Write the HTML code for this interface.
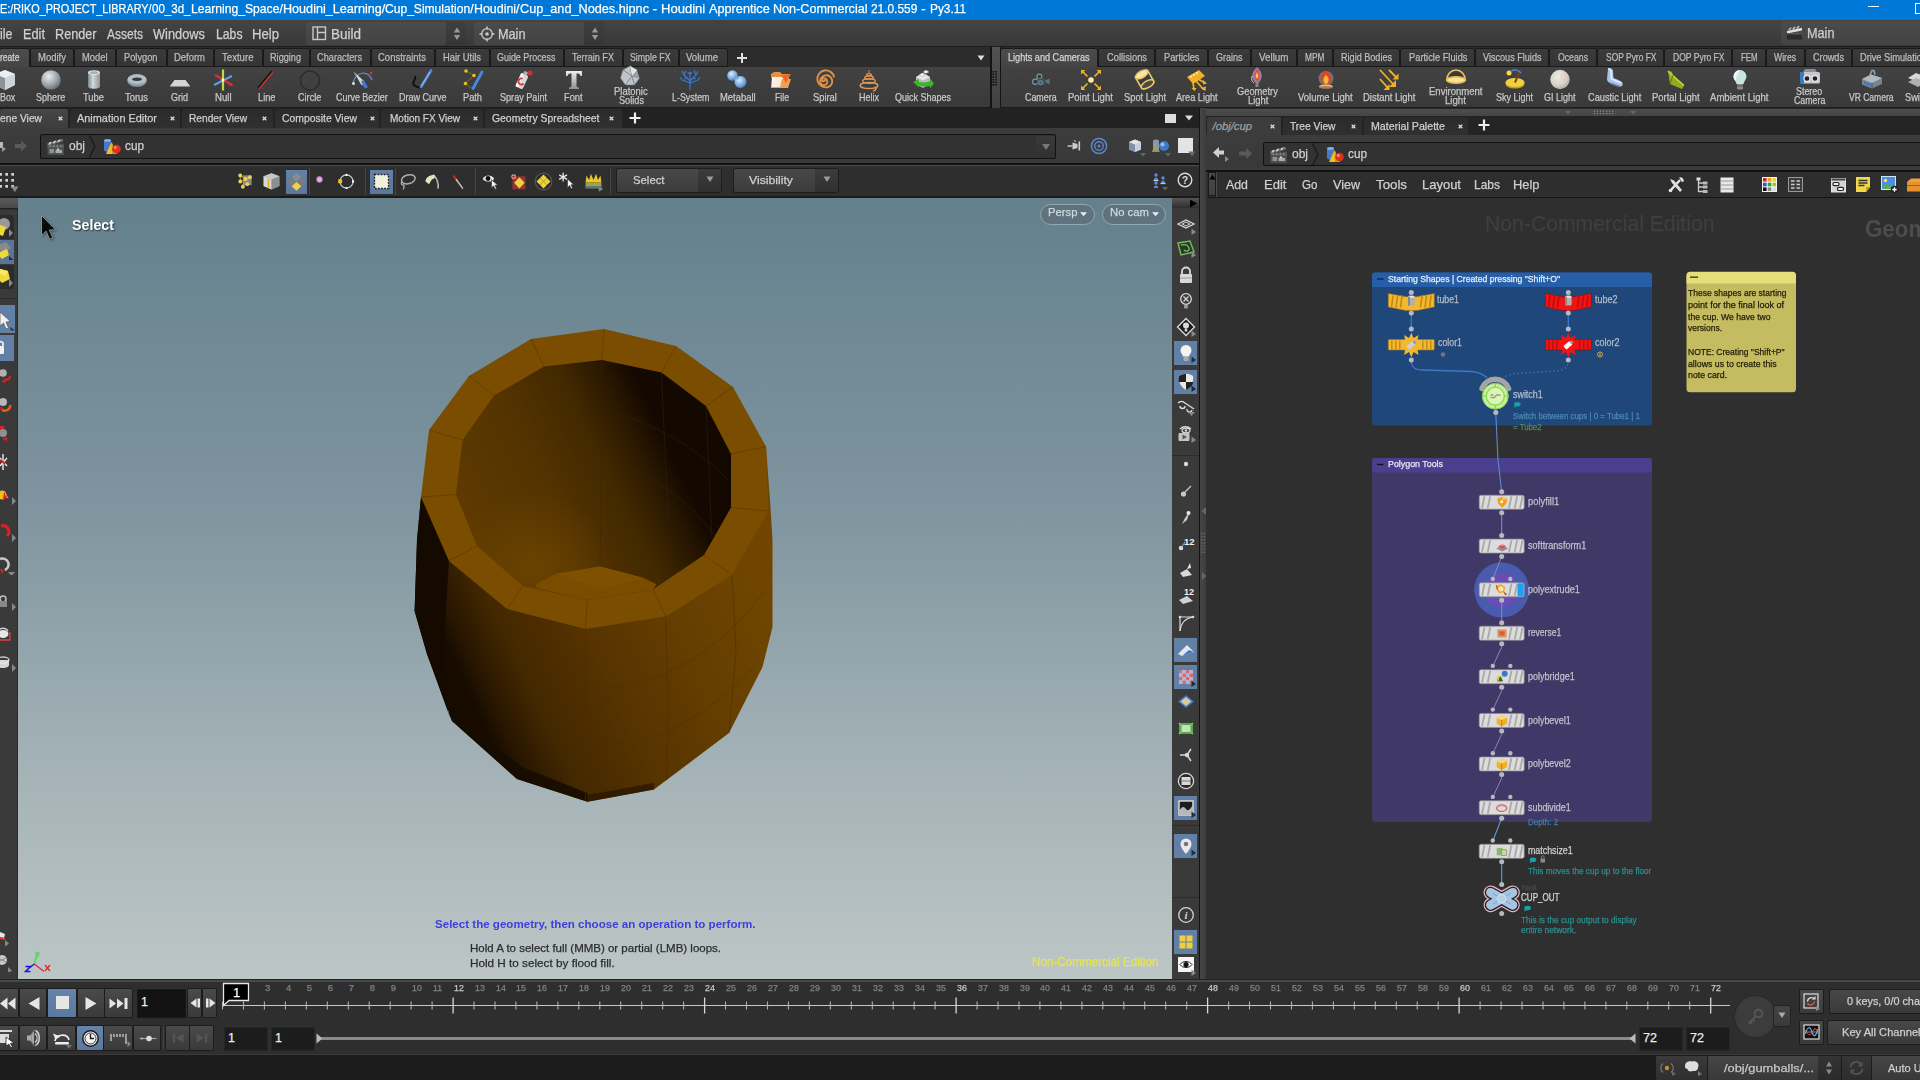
<!DOCTYPE html>
<html><head><meta charset="utf-8"><title>Houdini</title>
<style>
html,body{margin:0;padding:0;}html{overflow:hidden;width:1920px;height:1080px;}
body{width:1920px;height:1080px;overflow:hidden;background:#2f2f2f;position:relative;font-family:"Liberation Sans",sans-serif;}
body div,body span.t,body svg{position:absolute;display:block;}
span.t{white-space:nowrap;line-height:1.117;transform-origin:0 50%;-webkit-text-stroke:0.25px currentColor;}
</style></head><body>
<div style="left:0px;top:0px;width:1920px;height:20px;background:#0078d7;"></div>
<span class="t" style="left:0.0px;top:1.0px;font-size:13.5px;color:#fff;transform:scaleX(0.8024);">E:/RIKO_PROJECT_LIBRARY/</span>
<span class="t" style="left:151.8px;top:1.0px;font-size:13.5px;color:#fff;transform:scaleX(0.8557);">00_3d_</span>
<span class="t" style="left:190.5px;top:1.0px;font-size:13.5px;color:#fff;transform:scaleX(0.8993);">Learning_Space/</span>
<span class="t" style="left:282.5px;top:1.0px;font-size:13.5px;color:#fff;transform:scaleX(0.9335);">Houdini_Learning/</span>
<span class="t" style="left:385.0px;top:1.0px;font-size:13.5px;color:#fff;transform:scaleX(0.8934);">Cup_Simulation/</span>
<span class="t" style="left:473.8px;top:1.0px;font-size:13.5px;color:#fff;transform:scaleX(0.9196);">Houdini/</span>
<span class="t" style="left:519.5px;top:1.0px;font-size:13.5px;color:#fff;transform:scaleX(0.9392);">Cup_and_Nodes.hipnc</span>
<span class="t" style="left:652.5px;top:1.0px;font-size:13.5px;color:#fff;">-</span>
<span class="t" style="left:660.8px;top:1.0px;font-size:13.5px;color:#fff;transform:scaleX(0.9665);">Houdini</span>
<span class="t" style="left:708.8px;top:1.0px;font-size:13.5px;color:#fff;transform:scaleX(0.9412);">Apprentice</span>
<span class="t" style="left:773.0px;top:1.0px;font-size:13.5px;color:#fff;transform:scaleX(0.9331);">Non-Commercial</span>
<span class="t" style="left:871.2px;top:1.0px;font-size:13.5px;color:#fff;transform:scaleX(0.8801);">21.0.559</span>
<span class="t" style="left:921.0px;top:1.0px;font-size:13.5px;color:#fff;">-</span>
<span class="t" style="left:930.0px;top:1.0px;font-size:13.5px;color:#fff;transform:scaleX(0.8774);">Py3.11</span>
<div style="left:1868px;top:6px;width:11px;height:1px;background:#fff;"></div>
<div style="left:1915px;top:3px;width:10px;height:9px;background:transparent;border:1px solid #fff;"></div>
<div style="left:0px;top:20px;width:1920px;height:27px;background:linear-gradient(#444,#383838);"></div>
<div style="left:0px;top:46px;width:1920px;height:1px;background:#1d1d1d;"></div>
<span class="t" style="left:0.0px;top:25.7px;font-size:14.5px;color:#d0d0d0;transform:scaleX(0.8616);">ile</span>
<span class="t" style="left:23.0px;top:25.7px;font-size:14.5px;color:#d0d0d0;transform:scaleX(0.8805);">Edit</span>
<span class="t" style="left:55.0px;top:25.7px;font-size:14.5px;color:#d0d0d0;transform:scaleX(0.8726);">Render</span>
<span class="t" style="left:107.0px;top:25.7px;font-size:14.5px;color:#d0d0d0;transform:scaleX(0.8273);">Assets</span>
<span class="t" style="left:153.0px;top:25.7px;font-size:14.5px;color:#d0d0d0;transform:scaleX(0.8840);">Windows</span>
<span class="t" style="left:215.5px;top:25.7px;font-size:14.5px;color:#d0d0d0;transform:scaleX(0.8428);">Labs</span>
<span class="t" style="left:252.0px;top:25.7px;font-size:14.5px;color:#d0d0d0;transform:scaleX(0.9054);">Help</span>
<div style="left:306px;top:22px;width:140px;height:23px;background:linear-gradient(#4b4b4b,#434343);border-radius:2px;"></div>
<div style="left:446px;top:22px;width:20px;height:23px;background:linear-gradient(#3f3f3f,#363636);"></div>
<svg style="left:312px;top:26px;" width="15" height="15" viewBox="0 0 15 15"><rect x="1" y="1" width="12.5" height="12.5" fill="none" stroke="#c8c8c8" stroke-width="1.4"/><path d="M5.5 1v12.5M5.5 6.5h8" stroke="#c8c8c8" stroke-width="1.4" fill="none"/></svg>
<span class="t" style="left:331.0px;top:25.7px;font-size:14.5px;color:#d0d0d0;transform:scaleX(0.9304);">Build</span>
<svg style="left:452px;top:26px;" width="10" height="16" viewBox="0 0 10 16"><path d="M5 1.5L8.2 6.5H1.8zM5 14L8.2 9H1.8z" fill="#999"/></svg>
<div style="left:474px;top:22px;width:110px;height:23px;background:linear-gradient(#4b4b4b,#434343);border-radius:2px;"></div>
<div style="left:584px;top:22px;width:20px;height:23px;background:linear-gradient(#3f3f3f,#363636);"></div>
<svg style="left:479px;top:26px;" width="16" height="16" viewBox="0 0 16 16"><circle cx="8" cy="8" r="5.3" fill="none" stroke="#c8c8c8" stroke-width="1.3"/><circle cx="8" cy="8" r="1.8" fill="#c8c8c8"/><path d="M8 0.5v3M8 12.5v3M0.5 8h3M12.5 8h3" stroke="#c8c8c8" stroke-width="1.5"/></svg>
<span class="t" style="left:498.0px;top:25.7px;font-size:14.5px;color:#d0d0d0;transform:scaleX(0.8750);">Main</span>
<svg style="left:590px;top:26px;" width="10" height="16" viewBox="0 0 10 16"><path d="M5 1.5L8.2 6.5H1.8zM5 14L8.2 9H1.8z" fill="#999"/></svg>
<div style="left:1781px;top:21px;width:139px;height:24px;background:linear-gradient(#4b4b4b,#434343);border-radius:2px 0 0 2px;"></div>
<svg style="left:1786px;top:24px;" width="18" height="16" viewBox="0 0 18 16"><path d="M1 7l15-3.2v2.6L1 9.4z" fill="#ddd"/><path d="M2 6.2l2-2.8 1.8.3-2 2.8zM6 5.4l2-2.8 1.8.3-2 2.8zM10 4.6l2-2.8 1.8.3-2 2.8z" fill="#bbb"/><rect x="1" y="9" width="15" height="6.5" fill="#2a2a2a"/><rect x="1" y="9" width="15" height="1.5" fill="#555"/></svg>
<span class="t" style="left:1807.0px;top:24.9px;font-size:14.5px;color:#d0d0d0;transform:scaleX(0.8750);">Main</span>
<div style="left:0px;top:47px;width:1920px;height:20px;background:#2c2c2c;"></div>
<div style="left:0px;top:48.5px;width:29px;height:18.5px;background:linear-gradient(#4c4c4c,#454545);border-radius:2px 2px 0 0;box-shadow:0 0 0 1px #1a1a1a;"></div>
<span class="t" style="left:0.0px;top:51.7px;font-size:10.5px;color:#d4d4d4;transform:scaleX(0.8148);">reate</span>
<div style="left:31px;top:48.5px;width:42px;height:17.5px;background:linear-gradient(#3b3b3b,#343434);border-radius:2px 2px 0 0;box-shadow:0 0 0 1px #1a1a1a;"></div>
<span class="t" style="left:37.5px;top:51.7px;font-size:10.5px;color:#bdbdbd;transform:scaleX(0.9054);">Modify</span>
<div style="left:75px;top:48.5px;width:40px;height:17.5px;background:linear-gradient(#3b3b3b,#343434);border-radius:2px 2px 0 0;box-shadow:0 0 0 1px #1a1a1a;"></div>
<span class="t" style="left:81.5px;top:51.7px;font-size:10.5px;color:#bdbdbd;transform:scaleX(0.8916);">Model</span>
<div style="left:117px;top:48.5px;width:49px;height:17.5px;background:linear-gradient(#3b3b3b,#343434);border-radius:2px 2px 0 0;box-shadow:0 0 0 1px #1a1a1a;"></div>
<span class="t" style="left:124.0px;top:51.7px;font-size:10.5px;color:#bdbdbd;transform:scaleX(0.8828);">Polygon</span>
<div style="left:168px;top:48.5px;width:45px;height:17.5px;background:linear-gradient(#3b3b3b,#343434);border-radius:2px 2px 0 0;box-shadow:0 0 0 1px #1a1a1a;"></div>
<span class="t" style="left:174.0px;top:51.7px;font-size:10.5px;color:#bdbdbd;transform:scaleX(0.9005);">Deform</span>
<div style="left:215px;top:48.5px;width:47px;height:17.5px;background:linear-gradient(#3b3b3b,#343434);border-radius:2px 2px 0 0;box-shadow:0 0 0 1px #1a1a1a;"></div>
<span class="t" style="left:221.5px;top:51.7px;font-size:10.5px;color:#bdbdbd;transform:scaleX(0.9148);">Texture</span>
<div style="left:264px;top:48.5px;width:45px;height:17.5px;background:linear-gradient(#3b3b3b,#343434);border-radius:2px 2px 0 0;box-shadow:0 0 0 1px #1a1a1a;"></div>
<span class="t" style="left:270.0px;top:51.7px;font-size:10.5px;color:#bdbdbd;transform:scaleX(0.8706);">Rigging</span>
<div style="left:311px;top:48.5px;width:59px;height:17.5px;background:linear-gradient(#3b3b3b,#343434);border-radius:2px 2px 0 0;box-shadow:0 0 0 1px #1a1a1a;"></div>
<span class="t" style="left:317.0px;top:51.7px;font-size:10.5px;color:#bdbdbd;transform:scaleX(0.8763);">Characters</span>
<div style="left:372px;top:48.5px;width:62px;height:17.5px;background:linear-gradient(#3b3b3b,#343434);border-radius:2px 2px 0 0;box-shadow:0 0 0 1px #1a1a1a;"></div>
<span class="t" style="left:378.0px;top:51.7px;font-size:10.5px;color:#bdbdbd;transform:scaleX(0.9038);">Constraints</span>
<div style="left:436px;top:48.5px;width:53px;height:17.5px;background:linear-gradient(#3b3b3b,#343434);border-radius:2px 2px 0 0;box-shadow:0 0 0 1px #1a1a1a;"></div>
<span class="t" style="left:442.5px;top:51.7px;font-size:10.5px;color:#bdbdbd;transform:scaleX(0.8923);">Hair Utils</span>
<div style="left:491px;top:48.5px;width:72px;height:17.5px;background:linear-gradient(#3b3b3b,#343434);border-radius:2px 2px 0 0;box-shadow:0 0 0 1px #1a1a1a;"></div>
<span class="t" style="left:497.0px;top:51.7px;font-size:10.5px;color:#bdbdbd;transform:scaleX(0.8495);">Guide Process</span>
<div style="left:565px;top:48.5px;width:57px;height:17.5px;background:linear-gradient(#3b3b3b,#343434);border-radius:2px 2px 0 0;box-shadow:0 0 0 1px #1a1a1a;"></div>
<span class="t" style="left:572.0px;top:51.7px;font-size:10.5px;color:#bdbdbd;transform:scaleX(0.8672);">Terrain FX</span>
<div style="left:624px;top:48.5px;width:54px;height:17.5px;background:linear-gradient(#3b3b3b,#343434);border-radius:2px 2px 0 0;box-shadow:0 0 0 1px #1a1a1a;"></div>
<span class="t" style="left:630.0px;top:51.7px;font-size:10.5px;color:#bdbdbd;transform:scaleX(0.8362);">Simple FX</span>
<div style="left:680px;top:48.5px;width:47px;height:17.5px;background:linear-gradient(#3b3b3b,#343434);border-radius:2px 2px 0 0;box-shadow:0 0 0 1px #1a1a1a;"></div>
<span class="t" style="left:686.0px;top:51.7px;font-size:10.5px;color:#bdbdbd;transform:scaleX(0.9137);">Volume</span>
<div style="left:1001px;top:48.5px;width:96px;height:18.5px;background:linear-gradient(#4c4c4c,#454545);border-radius:2px 2px 0 0;box-shadow:0 0 0 1px #1a1a1a;"></div>
<span class="t" style="left:1007.5px;top:51.7px;font-size:10.5px;color:#d4d4d4;transform:scaleX(0.8673);">Lights and Cameras</span>
<div style="left:1099px;top:48.5px;width:55px;height:17.5px;background:linear-gradient(#3b3b3b,#343434);border-radius:2px 2px 0 0;box-shadow:0 0 0 1px #1a1a1a;"></div>
<span class="t" style="left:1106.5px;top:51.7px;font-size:10.5px;color:#bdbdbd;transform:scaleX(0.8902);">Collisions</span>
<div style="left:1156px;top:48.5px;width:51px;height:17.5px;background:linear-gradient(#3b3b3b,#343434);border-radius:2px 2px 0 0;box-shadow:0 0 0 1px #1a1a1a;"></div>
<span class="t" style="left:1163.5px;top:51.7px;font-size:10.5px;color:#bdbdbd;transform:scaleX(0.8817);">Particles</span>
<div style="left:1209px;top:48.5px;width:41px;height:17.5px;background:linear-gradient(#3b3b3b,#343434);border-radius:2px 2px 0 0;box-shadow:0 0 0 1px #1a1a1a;"></div>
<span class="t" style="left:1216.0px;top:51.7px;font-size:10.5px;color:#bdbdbd;transform:scaleX(0.8569);">Grains</span>
<div style="left:1252px;top:48.5px;width:44px;height:17.5px;background:linear-gradient(#3b3b3b,#343434);border-radius:2px 2px 0 0;box-shadow:0 0 0 1px #1a1a1a;"></div>
<span class="t" style="left:1258.5px;top:51.7px;font-size:10.5px;color:#bdbdbd;transform:scaleX(0.9360);">Vellum</span>
<div style="left:1298px;top:48.5px;width:34px;height:17.5px;background:linear-gradient(#3b3b3b,#343434);border-radius:2px 2px 0 0;box-shadow:0 0 0 1px #1a1a1a;"></div>
<span class="t" style="left:1304.5px;top:51.7px;font-size:10.5px;color:#bdbdbd;transform:scaleX(0.7960);">MPM</span>
<div style="left:1334px;top:48.5px;width:65px;height:17.5px;background:linear-gradient(#3b3b3b,#343434);border-radius:2px 2px 0 0;box-shadow:0 0 0 1px #1a1a1a;"></div>
<span class="t" style="left:1341.0px;top:51.7px;font-size:10.5px;color:#bdbdbd;transform:scaleX(0.8651);">Rigid Bodies</span>
<div style="left:1401px;top:48.5px;width:73px;height:17.5px;background:linear-gradient(#3b3b3b,#343434);border-radius:2px 2px 0 0;box-shadow:0 0 0 1px #1a1a1a;"></div>
<span class="t" style="left:1408.5px;top:51.7px;font-size:10.5px;color:#bdbdbd;transform:scaleX(0.8872);">Particle Fluids</span>
<div style="left:1476px;top:48.5px;width:72px;height:17.5px;background:linear-gradient(#3b3b3b,#343434);border-radius:2px 2px 0 0;box-shadow:0 0 0 1px #1a1a1a;"></div>
<span class="t" style="left:1483.0px;top:51.7px;font-size:10.5px;color:#bdbdbd;transform:scaleX(0.8666);">Viscous Fluids</span>
<div style="left:1550px;top:48.5px;width:46px;height:17.5px;background:linear-gradient(#3b3b3b,#343434);border-radius:2px 2px 0 0;box-shadow:0 0 0 1px #1a1a1a;"></div>
<span class="t" style="left:1558.0px;top:51.7px;font-size:10.5px;color:#bdbdbd;transform:scaleX(0.8290);">Oceans</span>
<div style="left:1598px;top:48.5px;width:65px;height:17.5px;background:linear-gradient(#3b3b3b,#343434);border-radius:2px 2px 0 0;box-shadow:0 0 0 1px #1a1a1a;"></div>
<span class="t" style="left:1605.5px;top:51.7px;font-size:10.5px;color:#bdbdbd;transform:scaleX(0.8038);">SOP Pyro FX</span>
<div style="left:1665px;top:48.5px;width:66px;height:17.5px;background:linear-gradient(#3b3b3b,#343434);border-radius:2px 2px 0 0;box-shadow:0 0 0 1px #1a1a1a;"></div>
<span class="t" style="left:1672.5px;top:51.7px;font-size:10.5px;color:#bdbdbd;transform:scaleX(0.8122);">DOP Pyro FX</span>
<div style="left:1733px;top:48.5px;width:32px;height:17.5px;background:linear-gradient(#3b3b3b,#343434);border-radius:2px 2px 0 0;box-shadow:0 0 0 1px #1a1a1a;"></div>
<span class="t" style="left:1740.5px;top:51.7px;font-size:10.5px;color:#bdbdbd;transform:scaleX(0.7444);">FEM</span>
<div style="left:1767px;top:48.5px;width:37px;height:17.5px;background:linear-gradient(#3b3b3b,#343434);border-radius:2px 2px 0 0;box-shadow:0 0 0 1px #1a1a1a;"></div>
<span class="t" style="left:1773.5px;top:51.7px;font-size:10.5px;color:#bdbdbd;transform:scaleX(0.8200);">Wires</span>
<div style="left:1806px;top:48.5px;width:45px;height:17.5px;background:linear-gradient(#3b3b3b,#343434);border-radius:2px 2px 0 0;box-shadow:0 0 0 1px #1a1a1a;"></div>
<span class="t" style="left:1812.5px;top:51.7px;font-size:10.5px;color:#bdbdbd;transform:scaleX(0.8710);">Crowds</span>
<div style="left:1853px;top:48.5px;width:72px;height:17.5px;background:linear-gradient(#3b3b3b,#343434);border-radius:2px 2px 0 0;box-shadow:0 0 0 1px #1a1a1a;"></div>
<span class="t" style="left:1860.0px;top:51.7px;font-size:10.5px;color:#bdbdbd;transform:scaleX(0.8764);">Drive Simulation</span>
<svg style="left:736px;top:52px;" width="12" height="12" viewBox="0 0 12 12"><path d="M6 1v10M1 6h10" stroke="#e0e0e0" stroke-width="2"/></svg>
<svg style="left:976px;top:54px;" width="10" height="8" viewBox="0 0 10 8"><path d="M1.5 1.5h7L5 6.5z" fill="#ddd"/></svg>
<div style="left:0px;top:67px;width:1920px;height:41px;background:linear-gradient(#424242,#393939);"></div>
<div style="left:0px;top:107px;width:1920px;height:1px;background:#1c1c1c;"></div>
<div style="left:990px;top:47px;width:1.5px;height:61px;background:#141414;"></div>
<div style="left:991.5px;top:47px;width:8.5px;height:61px;background:linear-gradient(#525252,#404040);"></div>
<div style="left:1000px;top:47px;width:1.2px;height:61px;background:#141414;"></div>
<svg style="left:992px;top:70px;" width="7" height="16" viewBox="0 0 7 16"><rect x="0.5" y="1" width="1.6" height="1.6" fill="#111"/><rect x="0.5" y="3.6" width="1.6" height="1.6" fill="#111"/><rect x="0.5" y="6.2" width="1.6" height="1.6" fill="#111"/><rect x="0.5" y="8.8" width="1.6" height="1.6" fill="#111"/><rect x="0.5" y="11.4" width="1.6" height="1.6" fill="#111"/><rect x="0.5" y="14" width="1.6" height="1.6" fill="#111"/><rect x="3.2" y="1" width="1.6" height="1.6" fill="#111"/><rect x="3.2" y="3.6" width="1.6" height="1.6" fill="#111"/><rect x="3.2" y="6.2" width="1.6" height="1.6" fill="#111"/><rect x="3.2" y="8.8" width="1.6" height="1.6" fill="#111"/><rect x="3.2" y="11.4" width="1.6" height="1.6" fill="#111"/><rect x="3.2" y="14" width="1.6" height="1.6" fill="#111"/></svg>
<span class="t" style="left:0.0px;top:91.9px;font-size:10.3px;color:#c8c8c8;transform:scaleX(0.8620);">Box</span>
<span class="t" style="left:35.8px;top:91.9px;font-size:10.3px;color:#c8c8c8;transform:scaleX(0.8791);">Sphere</span>
<span class="t" style="left:83.3px;top:91.9px;font-size:10.3px;color:#c8c8c8;transform:scaleX(0.9049);">Tube</span>
<span class="t" style="left:125.3px;top:91.9px;font-size:10.3px;color:#c8c8c8;transform:scaleX(0.9132);">Torus</span>
<span class="t" style="left:171.3px;top:91.9px;font-size:10.3px;color:#c8c8c8;transform:scaleX(0.8736);">Grid</span>
<span class="t" style="left:214.7px;top:91.9px;font-size:10.3px;color:#c8c8c8;transform:scaleX(0.9355);">Null</span>
<span class="t" style="left:257.5px;top:91.9px;font-size:10.3px;color:#c8c8c8;transform:scaleX(0.8986);">Line</span>
<span class="t" style="left:297.5px;top:91.9px;font-size:10.3px;color:#c8c8c8;transform:scaleX(0.8851);">Circle</span>
<span class="t" style="left:336.3px;top:91.9px;font-size:10.3px;color:#c8c8c8;transform:scaleX(0.8684);">Curve Bezier</span>
<span class="t" style="left:398.7px;top:91.9px;font-size:10.3px;color:#c8c8c8;transform:scaleX(0.8736);">Draw Curve</span>
<span class="t" style="left:463.0px;top:91.9px;font-size:10.3px;color:#c8c8c8;transform:scaleX(0.8967);">Path</span>
<span class="t" style="left:500.0px;top:91.9px;font-size:10.3px;color:#c8c8c8;transform:scaleX(0.8827);">Spray Paint</span>
<span class="t" style="left:564.2px;top:91.9px;font-size:10.3px;color:#c8c8c8;transform:scaleX(0.9025);">Font</span>
<span class="t" style="left:614.3px;top:85.9px;font-size:10.3px;color:#c8c8c8;transform:scaleX(0.9196);">Platonic</span>
<span class="t" style="left:618.8px;top:95.1px;font-size:10.3px;color:#c8c8c8;transform:scaleX(0.8911);">Solids</span>
<span class="t" style="left:671.7px;top:91.9px;font-size:10.3px;color:#c8c8c8;transform:scaleX(0.8621);">L-System</span>
<span class="t" style="left:719.7px;top:91.9px;font-size:10.3px;color:#c8c8c8;transform:scaleX(0.9144);">Metaball</span>
<span class="t" style="left:774.7px;top:91.9px;font-size:10.3px;color:#c8c8c8;transform:scaleX(0.8435);">File</span>
<span class="t" style="left:813.3px;top:91.9px;font-size:10.3px;color:#c8c8c8;transform:scaleX(0.9075);">Spiral</span>
<span class="t" style="left:858.7px;top:91.9px;font-size:10.3px;color:#c8c8c8;transform:scaleX(0.8736);">Helix</span>
<span class="t" style="left:895.3px;top:91.9px;font-size:10.3px;color:#c8c8c8;transform:scaleX(0.8733);">Quick Shapes</span>
<span class="t" style="left:1024.7px;top:91.9px;font-size:10.3px;color:#c8c8c8;transform:scaleX(0.8626);">Camera</span>
<span class="t" style="left:1068.0px;top:91.9px;font-size:10.3px;color:#c8c8c8;transform:scaleX(0.9204);">Point Light</span>
<span class="t" style="left:1123.8px;top:91.9px;font-size:10.3px;color:#c8c8c8;transform:scaleX(0.9054);">Spot Light</span>
<span class="t" style="left:1176.2px;top:91.9px;font-size:10.3px;color:#c8c8c8;transform:scaleX(0.8860);">Area Light</span>
<span class="t" style="left:1237.0px;top:85.9px;font-size:10.3px;color:#c8c8c8;transform:scaleX(0.9023);">Geometry</span>
<span class="t" style="left:1247.8px;top:95.1px;font-size:10.3px;color:#c8c8c8;transform:scaleX(0.9178);">Light</span>
<span class="t" style="left:1298.3px;top:91.9px;font-size:10.3px;color:#c8c8c8;transform:scaleX(0.9185);">Volume Light</span>
<span class="t" style="left:1362.5px;top:91.9px;font-size:10.3px;color:#c8c8c8;transform:scaleX(0.9170);">Distant Light</span>
<span class="t" style="left:1428.7px;top:85.9px;font-size:10.3px;color:#c8c8c8;transform:scaleX(0.9252);">Environment</span>
<span class="t" style="left:1445.3px;top:95.1px;font-size:10.3px;color:#c8c8c8;transform:scaleX(0.9357);">Light</span>
<span class="t" style="left:1496.3px;top:91.9px;font-size:10.3px;color:#c8c8c8;transform:scaleX(0.8733);">Sky Light</span>
<span class="t" style="left:1544.2px;top:91.9px;font-size:10.3px;color:#c8c8c8;transform:scaleX(0.8761);">GI Light</span>
<span class="t" style="left:1587.5px;top:91.9px;font-size:10.3px;color:#c8c8c8;transform:scaleX(0.8952);">Caustic Light</span>
<span class="t" style="left:1652.0px;top:91.9px;font-size:10.3px;color:#c8c8c8;transform:scaleX(0.9155);">Portal Light</span>
<span class="t" style="left:1710.3px;top:91.9px;font-size:10.3px;color:#c8c8c8;transform:scaleX(0.9288);">Ambient Light</span>
<span class="t" style="left:1796.3px;top:85.9px;font-size:10.3px;color:#c8c8c8;transform:scaleX(0.8633);">Stereo</span>
<span class="t" style="left:1793.7px;top:95.1px;font-size:10.3px;color:#c8c8c8;transform:scaleX(0.8544);">Camera</span>
<span class="t" style="left:1849.2px;top:91.9px;font-size:10.3px;color:#c8c8c8;transform:scaleX(0.8271);">VR Camera</span>
<span class="t" style="left:1904.7px;top:91.9px;font-size:10.3px;color:#c8c8c8;transform:scaleX(0.9000);">Switcher</span>
<div style="left:0px;top:108px;width:1199px;height:21px;background:#222;"></div>
<div style="left:0px;top:109px;width:68px;height:20px;background:linear-gradient(#464646,#3d3d3d);border-radius:2px 2px 0 0;"></div>
<span class="t" style="left:0.0px;top:112.4px;font-size:11.3px;color:#d0d0d0;transform:scaleX(0.9075);">ene View</span>
<svg style="left:57.5px;top:116px;" width="5" height="5" viewBox="0 0 5 5"><path d="M0.7 0.7L4.3 4.3M4.3 0.7L0.7 4.3" stroke="#ddd" stroke-width="1.3"/></svg>
<div style="left:70px;top:109px;width:110px;height:20px;background:linear-gradient(#2b2b2b,#303030);border-radius:2px 2px 0 0;"></div>
<span class="t" style="left:77.0px;top:112.4px;font-size:11.3px;color:#d0d0d0;transform:scaleX(0.9649);">Animation Editor</span>
<svg style="left:169.5px;top:116px;" width="5" height="5" viewBox="0 0 5 5"><path d="M0.7 0.7L4.3 4.3M4.3 0.7L0.7 4.3" stroke="#ddd" stroke-width="1.3"/></svg>
<div style="left:182px;top:109px;width:91px;height:20px;background:linear-gradient(#2b2b2b,#303030);border-radius:2px 2px 0 0;"></div>
<span class="t" style="left:189.0px;top:112.4px;font-size:11.3px;color:#d0d0d0;transform:scaleX(0.8993);">Render View</span>
<svg style="left:262.0px;top:116px;" width="5" height="5" viewBox="0 0 5 5"><path d="M0.7 0.7L4.3 4.3M4.3 0.7L0.7 4.3" stroke="#ddd" stroke-width="1.3"/></svg>
<div style="left:275px;top:109px;width:104px;height:20px;background:linear-gradient(#2b2b2b,#303030);border-radius:2px 2px 0 0;"></div>
<span class="t" style="left:281.5px;top:112.4px;font-size:11.3px;color:#d0d0d0;transform:scaleX(0.9209);">Composite View</span>
<svg style="left:369.5px;top:116px;" width="5" height="5" viewBox="0 0 5 5"><path d="M0.7 0.7L4.3 4.3M4.3 0.7L0.7 4.3" stroke="#ddd" stroke-width="1.3"/></svg>
<div style="left:381px;top:109px;width:102px;height:20px;background:linear-gradient(#2b2b2b,#303030);border-radius:2px 2px 0 0;"></div>
<span class="t" style="left:389.5px;top:112.4px;font-size:11.3px;color:#d0d0d0;transform:scaleX(0.8869);">Motion FX View</span>
<svg style="left:472.5px;top:116px;" width="5" height="5" viewBox="0 0 5 5"><path d="M0.7 0.7L4.3 4.3M4.3 0.7L0.7 4.3" stroke="#ddd" stroke-width="1.3"/></svg>
<div style="left:485px;top:109px;width:137px;height:20px;background:linear-gradient(#2b2b2b,#303030);border-radius:2px 2px 0 0;"></div>
<span class="t" style="left:492.0px;top:112.4px;font-size:11.3px;color:#d0d0d0;transform:scaleX(0.9201);">Geometry Spreadsheet</span>
<svg style="left:608.5px;top:116px;" width="5" height="5" viewBox="0 0 5 5"><path d="M0.7 0.7L4.3 4.3M4.3 0.7L0.7 4.3" stroke="#ddd" stroke-width="1.3"/></svg>
<svg style="left:628px;top:111px;" width="14" height="14" viewBox="0 0 14 14"><path d="M7 1.5v11M1.5 7h11" stroke="#eee" stroke-width="2.2"/></svg>
<div style="left:1165px;top:114px;width:11px;height:9px;background:#ddd;"></div>
<svg style="left:1184px;top:114px;" width="10" height="8" viewBox="0 0 10 8"><path d="M1 1.5h8L5 6.5z" fill="#ddd"/></svg>
<div style="left:0px;top:128px;width:1199px;height:7px;background:#3c3c3c;"></div>
<div style="left:0px;top:134px;width:1199px;height:29px;background:linear-gradient(#3c3c3c,#393939);"></div>
<div style="left:40px;top:134px;width:1016px;height:25px;background:#323232;border:1.500px solid #101010;box-sizing:border-box;border-radius:2px;"></div>
<div style="left:1036px;top:136px;width:19px;height:21px;background:linear-gradient(#3a3a3a,#303030);"></div>
<svg style="left:1041px;top:143px;" width="10" height="8" viewBox="0 0 10 8"><path d="M1 1h8L5 7z" fill="#777"/></svg>
<svg style="left:0px;top:139px;" width="8" height="16" viewBox="0 0 8 16"><path d="M0 3h3v6H0z" fill="#bbb"/><path d="M2 11l4 3-4 3z" fill="#999" transform="translate(0,-4)"/></svg>
<svg style="left:14px;top:139px;" width="14" height="14" viewBox="0 0 14 14"><path d="M1 5h6V1.5L13 7 7 12.500V9H1z" fill="#5a5a5a"/></svg>
<svg style="left:46.5px;top:137.2px;" width="18" height="19" viewBox="0 0 18 19"><rect x="0.500" y="6.500" width="16.500" height="11.500" fill="#4c504e"/><path d="M0.500 6l15.500-4.200v2.800L0.500 8.500z" fill="#6a6e6c"/><path d="M2.500 5.300l2.200-.6-1.200 2.400-2.200.6zM7 4.100l2.200-.6L8 5.900l-2.200.6zM11.500 2.900l2.200-.6-1.200 2.400-2.200.6z" fill="#d8d8d8"/><rect x="0.500" y="8.500" width="16.500" height="2" fill="#5c605e"/><path d="M2.500 9l1.500 0M6 9h1.500M9.500 9H11M13 9h1.500" stroke="#aaa" stroke-width="1"/><rect x="2.500" y="12" width="4.500" height="4" fill="#8a9690"/><rect x="8.500" y="13" width="6.500" height="3" fill="#a4aca8"/><circle cx="11" cy="12.500" r="1.200" fill="#c4ccc8"/></svg>
<span class="t" style="left:69.0px;top:139.4px;font-size:13px;color:#d0d0d0;transform:scaleX(0.9222);">obj</span>
<svg style="left:87.5px;top:135.2px;" width="9" height="23" viewBox="0 0 9 23"><path d="M1.500 0.500L7 11.500 1.500 22.500" fill="none" stroke="#161616" stroke-width="1.200"/></svg>
<svg style="left:101.5px;top:137.7px;" width="20" height="18" viewBox="0 0 20 18"><path d="M2 2.500c0-2 7-2 7 0v9.500c0 2-7 2-7 0z" fill="#4a78c8"/><ellipse cx="5.500" cy="2.500" rx="3.500" ry="1.300" fill="#86aef0"/><path d="M9.500 4L15 16H4z" fill="#f0c020"/><path d="M9.500 4L15 16H10z" fill="#d09a10"/><circle cx="14.500" cy="11" r="4.300" fill="#e03020"/><circle cx="13.300" cy="9.600" r="1.500" fill="#ff8070"/></svg>
<span class="t" style="left:125.0px;top:139.4px;font-size:13px;color:#d0d0d0;transform:scaleX(0.9065);">cup</span>
<svg style="left:1067px;top:139px;" width="16" height="14" viewBox="0 0 16 14"><path d="M0.500 7h5" stroke="#ccc" stroke-width="1.400"/><path d="M5.500 3.500l5 1.500v4l-5 1.500z" fill="#ccc"/><rect x="11.500" y="2.500" width="1.600" height="9" fill="#ccc"/><path d="M7 1.500l2 1" stroke="#ccc"/></svg>
<svg style="left:1090px;top:137px;" width="18" height="18" viewBox="0 0 18 18"><circle cx="9" cy="9" r="7.600" fill="none" stroke="#5a86c8" stroke-width="1.500"/><circle cx="9" cy="9" r="4.300" fill="none" stroke="#5a86c8" stroke-width="1.400"/><circle cx="9" cy="9" r="1.500" fill="#5a86c8"/></svg>
<svg style="left:1127px;top:138px;" width="20" height="20" viewBox="0 0 20 20"><path d="M2 4l6-2.500 6 2.500v7.500L8 14l-6-2.500z" fill="#a8b4c4"/><path d="M2 4l6 2.500v7.500l-6-2.500z" fill="#8090a8"/><path d="M8 6.500L14 4v7.500L8 14z" fill="#c8d0dc"/><path d="M2 4l6-2.500 6 2.500-6 2.500z" fill="#e0e6ee"/><path d="M13 15h6l-3 3.500z" fill="#666"/></svg>
<svg style="left:1151px;top:138px;" width="22" height="20" viewBox="0 0 22 20"><path d="M2 3c0-2 6-2 6 0v9H2z" fill="#8a96a8"/><path d="M4 5l5 9H1z" fill="#9aa46c" opacity=".9"/><circle cx="13" cy="8" r="5" fill="#3f78c8"/><circle cx="11.500" cy="6.500" r="2" fill="#9cc0f0"/><path d="M14 15h6l-3 3.500z" fill="#666"/></svg>
<div style="left:1178px;top:138px;width:15px;height:15px;background:#e4e4e4;"></div>
<svg style="left:1188px;top:151px;" width="8" height="6" viewBox="0 0 8 6"><path d="M0.500 0.500h7L4 5.500z" fill="#666"/></svg>
<div style="left:0px;top:162.5px;width:1199px;height:2.2px;background:#121212;"></div>
<div style="left:0px;top:164.7px;width:1199px;height:1.8px;background:#4c4c4c;"></div>
<div style="left:0px;top:166.5px;width:1199px;height:30px;background:#2e2e2e;"></div>
<div style="left:0px;top:196px;width:1199px;height:2px;background:#1a1a1a;"></div>
<div style="left:617px;top:169px;width:104px;height:23px;background:linear-gradient(#484848,#3c3c3c);border-radius:2px;box-shadow:0 0 0 1px #1d1d1d;"></div>
<div style="left:698px;top:169px;width:23px;height:23px;background:linear-gradient(#3b3b3b,#303030);border-radius:0 2px 2px 0;"></div>
<span class="t" style="left:632.5px;top:173.8px;font-size:11.8px;color:#d0d0d0;transform:scaleX(0.9605);">Select</span>
<svg style="left:705.5px;top:176px;" width="8" height="7" viewBox="0 0 8 7"><path d="M0.500 0.500h7L4 6z" fill="#9a9a9a"/></svg>
<div style="left:734px;top:169px;width:104px;height:23px;background:linear-gradient(#484848,#3c3c3c);border-radius:2px;box-shadow:0 0 0 1px #1d1d1d;"></div>
<div style="left:815px;top:169px;width:23px;height:23px;background:linear-gradient(#3b3b3b,#303030);border-radius:0 2px 2px 0;"></div>
<span class="t" style="left:748.5px;top:173.8px;font-size:11.8px;color:#d0d0d0;transform:scaleX(1.0375);">Visibility</span>
<svg style="left:822.5px;top:176px;" width="8" height="7" viewBox="0 0 8 7"><path d="M0.500 0.500h7L4 6z" fill="#9a9a9a"/></svg>
<div style="left:610px;top:168px;width:1px;height:26px;background:#444;"></div>
<svg style="left:1177px;top:172px;" width="16" height="16" viewBox="0 0 16 16"><circle cx="8" cy="8" r="6.800" fill="none" stroke="#d8d8d8" stroke-width="1.400"/><text x="8" y="12" font-size="10.500" font-weight="bold" text-anchor="middle" fill="#d8d8d8" font-family="Liberation Sans">?</text></svg>
<svg style="left:1152px;top:172px;" width="18" height="20" viewBox="0 0 18 20"><circle cx="4" cy="3" r="1.700" fill="#5a8adc"/><path d="M1.800 8c0-3.500 4.400-3.500 4.400 0z" fill="#5a8adc"/><circle cx="11" cy="6" r="1.700" fill="#5a8adc"/><path d="M8.800 11c0-3.500 4.400-3.500 4.400 0z" fill="#5a8adc"/><circle cx="4" cy="11" r="1.700" fill="#5a8adc"/><path d="M1.800 16c0-3.500 4.400-3.500 4.400 0z" fill="#5a8adc"/><path d="M1.500 8.600h5M8.500 11.600h5" stroke="#ddd" stroke-width="1"/><path d="M10 15h6l-3 3.500z" fill="#666"/></svg>
<div style="left:18px;top:198px;width:1154px;height:781px;background:linear-gradient(#64808d 0%,#7f959f 40%,#a1b0b5 70%,#bdc6c6 100%);"></div>
<div style="left:0px;top:198px;width:18px;height:781px;background:#3a3a3a;"></div>
<div style="left:17px;top:198px;width:1px;height:781px;background:#2b2b2b;"></div>
<div style="left:0px;top:198px;width:18px;height:12px;background:linear-gradient(#454545,#2e2e2e);"></div>
<div style="left:1172px;top:198px;width:27px;height:781px;background:#3a3a3a;"></div>
<div style="left:1172px;top:198px;width:27px;height:10px;background:linear-gradient(#555,#2e2e2e);"></div>
<svg style="left:1189px;top:199px;" width="9" height="9" viewBox="0 0 9 9"><path d="M1 0.500L8 4.500 1 8.500z" fill="#000"/></svg>
<div style="left:1199px;top:108px;width:7px;height:871px;background:linear-gradient(90deg,#484848,#3c3c3c);"></div>
<div style="left:1199px;top:108px;width:1px;height:871px;background:#141414;"></div>
<div style="left:1206px;top:108px;width:714px;height:9px;background:#2a2a2a;"></div>
<div style="left:1206px;top:108.5px;width:714px;height:7px;background:linear-gradient(#4e4e4e,#444);"></div>
<svg style="left:1560px;top:109px;" width="90" height="7" viewBox="0 0 90 7"><path d="M5 2h6l-3 3.500zM70 2h6l-3 3.500z" fill="#666"/><rect x="34" y="1.5" width="1.300" height="1.300" fill="#888"/><rect x="34" y="4" width="1.300" height="1.300" fill="#888"/><rect x="37" y="1.5" width="1.300" height="1.300" fill="#888"/><rect x="37" y="4" width="1.300" height="1.300" fill="#888"/><rect x="40" y="1.5" width="1.300" height="1.300" fill="#888"/><rect x="40" y="4" width="1.300" height="1.300" fill="#888"/><rect x="43" y="1.5" width="1.300" height="1.300" fill="#888"/><rect x="43" y="4" width="1.300" height="1.300" fill="#888"/><rect x="46" y="1.5" width="1.300" height="1.300" fill="#888"/><rect x="46" y="4" width="1.300" height="1.300" fill="#888"/><rect x="49" y="1.5" width="1.300" height="1.300" fill="#888"/><rect x="49" y="4" width="1.300" height="1.300" fill="#888"/><rect x="52" y="1.5" width="1.300" height="1.300" fill="#888"/><rect x="52" y="4" width="1.300" height="1.300" fill="#888"/></svg>
<div style="left:1206px;top:116px;width:714px;height:20px;background:#242424;"></div>
<div style="left:1207px;top:117px;width:74px;height:19px;background:#3c3c3c;border-radius:2px 2px 0 0;"></div>
<span class="t" style="left:1212.5px;top:120.4px;font-size:11.3px;color:#a0a0a0;font-style:italic;">/obj/cup</span>
<svg style="left:1270.0px;top:124px;" width="5" height="5" viewBox="0 0 5 5"><path d="M0.7 0.7L4.3 4.3M4.3 0.7L0.7 4.3" stroke="#ddd" stroke-width="1.3"/></svg>
<div style="left:1283px;top:117px;width:79px;height:19px;background:linear-gradient(#2b2b2b,#303030);border-radius:2px 2px 0 0;"></div>
<span class="t" style="left:1289.5px;top:120.4px;font-size:11.3px;color:#d0d0d0;transform:scaleX(0.9056);">Tree View</span>
<svg style="left:1351.0px;top:124px;" width="5" height="5" viewBox="0 0 5 5"><path d="M0.7 0.7L4.3 4.3M4.3 0.7L0.7 4.3" stroke="#ddd" stroke-width="1.3"/></svg>
<div style="left:1364px;top:117px;width:104px;height:19px;background:linear-gradient(#2b2b2b,#303030);border-radius:2px 2px 0 0;"></div>
<span class="t" style="left:1371.0px;top:120.4px;font-size:11.3px;color:#d0d0d0;transform:scaleX(0.9425);">Material Palette</span>
<svg style="left:1457.5px;top:124px;" width="5" height="5" viewBox="0 0 5 5"><path d="M0.7 0.7L4.3 4.3M4.3 0.7L0.7 4.3" stroke="#ddd" stroke-width="1.3"/></svg>
<svg style="left:1477px;top:118px;" width="14" height="14" viewBox="0 0 14 14"><path d="M7 1.500v11M1.500 7h11" stroke="#eee" stroke-width="2.200"/></svg>
<div style="left:1206px;top:135px;width:714px;height:7px;background:#3c3c3c;"></div>
<div style="left:1206px;top:141px;width:714px;height:25px;background:linear-gradient(#3c3c3c,#383838);"></div>
<svg style="left:1212px;top:146px;" width="20" height="18" viewBox="0 0 20 18"><path d="M12 4.500H7V1L1 6.500 7 12V8.500h5z" fill="#d0d0d0"/><path d="M14 11l4 3-4 3z" fill="#888" transform="translate(-1,-1)"/></svg>
<svg style="left:1238px;top:147px;" width="16" height="13" viewBox="0 0 16 13"><path d="M1 4.500h7V1l6 5.500L8 12V8.500H1z" fill="#5a5a5a"/></svg>
<div style="left:1263px;top:141.5px;width:660px;height:24.5px;background:#323232;border:1.500px solid #101010;box-sizing:border-box;border-radius:2px;"></div>
<svg style="left:1269.5px;top:145px;" width="18" height="19" viewBox="0 0 18 19"><rect x="0.500" y="6.500" width="16.500" height="11.500" fill="#4c504e"/><path d="M0.500 6l15.500-4.200v2.800L0.500 8.500z" fill="#6a6e6c"/><path d="M2.500 5.300l2.200-.6-1.200 2.400-2.200.6zM7 4.100l2.200-.6L8 5.900l-2.200.6zM11.500 2.900l2.200-.6-1.200 2.400-2.200.6z" fill="#d8d8d8"/><rect x="0.500" y="8.500" width="16.500" height="2" fill="#5c605e"/><path d="M2.500 9l1.500 0M6 9h1.500M9.500 9H11M13 9h1.500" stroke="#aaa" stroke-width="1"/><rect x="2.500" y="12" width="4.500" height="4" fill="#8a9690"/><rect x="8.500" y="13" width="6.500" height="3" fill="#a4aca8"/><circle cx="11" cy="12.500" r="1.200" fill="#c4ccc8"/></svg>
<span class="t" style="left:1292.0px;top:147.2px;font-size:13px;color:#d0d0d0;transform:scaleX(0.9222);">obj</span>
<svg style="left:1310.5px;top:143px;" width="9" height="23" viewBox="0 0 9 23"><path d="M1.500 0.500L7 11.500 1.500 22.500" fill="none" stroke="#161616" stroke-width="1.200"/></svg>
<svg style="left:1324.5px;top:145.5px;" width="20" height="18" viewBox="0 0 20 18"><path d="M2 2.500c0-2 7-2 7 0v9.500c0 2-7 2-7 0z" fill="#4a78c8"/><ellipse cx="5.500" cy="2.500" rx="3.500" ry="1.300" fill="#86aef0"/><path d="M9.500 4L15 16H4z" fill="#f0c020"/><path d="M9.500 4L15 16H10z" fill="#d09a10"/><circle cx="14.500" cy="11" r="4.300" fill="#e03020"/><circle cx="13.300" cy="9.600" r="1.500" fill="#ff8070"/></svg>
<span class="t" style="left:1348.0px;top:147.2px;font-size:13px;color:#d0d0d0;transform:scaleX(0.9065);">cup</span>
<div style="left:1206px;top:166px;width:714px;height:4.5px;background:#3a3a3a;"></div>
<div style="left:1206px;top:170.3px;width:714px;height:1.8px;background:#121212;"></div>
<div style="left:1206px;top:172px;width:714px;height:26px;background:#2e2e2e;"></div>
<div style="left:1207px;top:197px;width:713px;height:1px;background:#161616;"></div>
<div style="left:1208px;top:172px;width:8px;height:24px;background:linear-gradient(#4a4a4a,#404040);border:1px solid #1a1a1a;box-sizing:border-box;"></div>
<svg style="left:1208.5px;top:174px;" width="7" height="6" viewBox="0 0 7 6"><path d="M3.500 0.500L6.500 5.500H0.500z" fill="#000"/></svg>
<div style="left:1216px;top:172px;width:1px;height:25px;background:#4a4a4a;"></div>
<span class="t" style="left:1226.0px;top:176.9px;font-size:13.6px;color:#d0d0d0;transform:scaleX(0.9091);">Add</span>
<span class="t" style="left:1264.0px;top:176.9px;font-size:13.6px;color:#d0d0d0;transform:scaleX(0.9601);">Edit</span>
<span class="t" style="left:1301.5px;top:176.9px;font-size:13.6px;color:#d0d0d0;transform:scaleX(0.8544);">Go</span>
<span class="t" style="left:1333.0px;top:176.9px;font-size:13.6px;color:#d0d0d0;transform:scaleX(0.9236);">View</span>
<span class="t" style="left:1375.5px;top:176.9px;font-size:13.6px;color:#d0d0d0;transform:scaleX(0.9764);">Tools</span>
<span class="t" style="left:1421.5px;top:176.9px;font-size:13.6px;color:#d0d0d0;transform:scaleX(0.9551);">Layout</span>
<span class="t" style="left:1474.0px;top:176.9px;font-size:13.6px;color:#d0d0d0;transform:scaleX(0.8816);">Labs</span>
<span class="t" style="left:1513.0px;top:176.9px;font-size:13.6px;color:#d0d0d0;transform:scaleX(0.9474);">Help</span>
<svg style="left:1667px;top:176px;" width="19" height="18" viewBox="0 0 19 18"><path d="M3 15L13 4" stroke="#e8e8e8" stroke-width="2.400"/><path d="M12 1.500a3.500 3.500 0 0 1 4.500 4.500l-2-.5-1-2z" fill="#e8e8e8"/><path d="M3 3l4 1.500 8 9.500-2 2-8-9z" fill="#ddd"/><circle cx="3.500" cy="14.500" r="1.800" fill="#e8e8e8"/></svg>
<svg style="left:1696px;top:177px;" width="12" height="18" viewBox="0 0 12 18"><path d="M2.500 1v13.500h7M2.500 6h7M2.500 10h7" stroke="#ccc" stroke-width="1.300" fill="none"/><rect x="0.500" y="0.500" width="4" height="3" fill="#ddd"/><rect x="7" y="4.500" width="4.500" height="3" fill="#bbb"/><rect x="7" y="8.500" width="4.500" height="3" fill="#bbb"/><rect x="7" y="13" width="4.500" height="3" fill="#bbb"/></svg>
<svg style="left:1720px;top:177px;" width="14" height="16" viewBox="0 0 14 16"><rect x="0.500" y="0.500" width="13" height="15" fill="#e8e8e8"/><path d="M0.500 4h13M0.500 8h13M0.500 12h13" stroke="#999" stroke-width="1.100"/></svg>
<svg style="left:1762px;top:177px;" width="15" height="15" viewBox="0 0 15 15"><rect width="15" height="15" fill="#f4f4f4"/><rect x="1.0" y="1.0" width="3.600" height="3.600" fill="#d82020"/><rect x="5.7" y="1.0" width="3.600" height="3.600" fill="#f0a020"/><rect x="10.4" y="1.0" width="3.600" height="3.600" fill="#f0d820"/><rect x="1.0" y="5.7" width="3.600" height="3.600" fill="#2060d0"/><rect x="5.7" y="5.7" width="3.600" height="3.600" fill="#30a030"/><rect x="10.4" y="5.7" width="3.600" height="3.600" fill="#90d030"/><rect x="1.0" y="10.4" width="3.600" height="3.600" fill="#111"/><rect x="5.7" y="10.4" width="3.600" height="3.600" fill="#888"/><rect x="10.4" y="10.4" width="3.600" height="3.600" fill="#ddd"/></svg>
<svg style="left:1788px;top:177px;" width="15" height="15" viewBox="0 0 15 15"><rect x="0.500" y="0.500" width="14" height="14" fill="#3c3c3c" stroke="#999"/><path d="M3 4h3.500M8.500 4H12M3 7.500h3.500M8.500 7.500H12M3 11h3.500M8.500 11H12" stroke="#ccc" stroke-width="1.600"/></svg>
<svg style="left:1831px;top:178px;" width="15" height="15" viewBox="0 0 15 15"><rect x="0.500" y="0.500" width="14" height="13.500" fill="#d4d4d4" stroke="#e4e4e4" stroke-width="1"/><rect x="0.500" y="0.500" width="14" height="2" fill="#444"/><rect x="2" y="4.500" width="6" height="3.200" rx="1.200" fill="#eee" stroke="#222" stroke-width="1.200"/><rect x="6.500" y="9.300" width="6" height="3.200" rx="1.200" fill="#eee" stroke="#222" stroke-width="1.200"/></svg>
<svg style="left:1855px;top:176px;" width="16" height="17" viewBox="0 0 16 17"><path d="M1 1h14v10l-4 5H1z" fill="#f0d848"/><path d="M15 11l-4 5v-5z" fill="#c0a020"/><path d="M3.500 4.500h9M3.500 7h9M3.500 9.500h6" stroke="#333" stroke-width="1.300"/></svg>
<svg style="left:1881px;top:176px;" width="18" height="18" viewBox="0 0 18 18"><rect x="0.500" y="0.500" width="14" height="13" fill="#4a90e0" stroke="#d0e4f8" stroke-width="1"/><circle cx="4.500" cy="4.500" r="1.700" fill="#f8e060"/><path d="M1 13l4.500-5 3 3 2-2 4 4z" fill="#58b048"/><circle cx="13.500" cy="13.500" r="3.800" fill="#222"/><path d="M13.500 11.300v4.400M11.300 13.500h4.400" stroke="#fff" stroke-width="1.300"/></svg>
<svg style="left:1906px;top:177px;" width="14" height="16" viewBox="0 0 14 16"><path d="M1 5l4-3.500h9v3.500z" fill="#f0a040"/><rect x="1" y="5" width="13" height="9.500" fill="#e89030"/><path d="M1 8.500h13" stroke="#a86010" stroke-width="1"/></svg>
<div style="left:1206px;top:198px;width:714px;height:781px;background:#2f2f2f;"></div>
<span class="t" style="left:1484.5px;top:211.8px;font-size:21.5px;color:#3f3f3f;transform:scaleX(0.9850);">Non-Commercial Edition</span>
<span class="t" style="left:1865.0px;top:215.8px;font-size:24px;color:#4c4c4c;font-weight:bold;-webkit-text-stroke:0;transform:scaleX(0.9300);">Geometry</span>
<div style="left:0px;top:979px;width:1920px;height:3px;background:#484848;"></div>
<div style="left:0px;top:979px;width:1920px;height:1px;background:#222;"></div>
<div style="left:0px;top:982px;width:1920px;height:73px;background:#2e2e2e;"></div>
<div style="left:0px;top:1054px;width:1920px;height:1px;background:#3a3a3a;"></div>
<div style="left:-8px;top:989px;width:26px;height:28px;background:linear-gradient(#4a4a4a,#3a3a3a);box-shadow:0 0 0 1px #1c1c1c;border-radius:1px;"></div>
<div style="left:20px;top:989px;width:26px;height:28px;background:linear-gradient(#4a4a4a,#3a3a3a);box-shadow:0 0 0 1px #1c1c1c;border-radius:1px;"></div>
<div style="left:48px;top:989px;width:28px;height:28px;background:linear-gradient(#6684ab,#5b799f);box-shadow:0 0 0 1px #1c1c1c;border-radius:1px;"></div>
<div style="left:78px;top:989px;width:26px;height:28px;background:linear-gradient(#4a4a4a,#3a3a3a);box-shadow:0 0 0 1px #1c1c1c;border-radius:1px;"></div>
<div style="left:105px;top:989px;width:27px;height:28px;background:linear-gradient(#4a4a4a,#3a3a3a);box-shadow:0 0 0 1px #1c1c1c;border-radius:1px;"></div>
<svg style="left:0px;top:997px;" width="16" height="13" viewBox="0 0 16 13"><path d="M7.500 0.500v12L0 6.500zM15.500 0.500v12L8 6.500z" fill="#e6e6e6"/></svg>
<svg style="left:28px;top:997px;" width="12" height="13" viewBox="0 0 12 13"><path d="M11.500 0v13L0.500 6.500z" fill="#e6e6e6"/></svg>
<div style="left:56px;top:996px;width:13px;height:13px;background:#e6e6e6;"></div>
<svg style="left:85px;top:997px;" width="12" height="13" viewBox="0 0 12 13"><path d="M0.500 0v13L11.500 6.500z" fill="#e6e6e6"/></svg>
<svg style="left:109px;top:998px;" width="21" height="11" viewBox="0 0 21 11"><path d="M0.500 0.500v10L7 5.500zM8 0.500v10L14.500 5.500z" fill="#e6e6e6"/><rect x="15.500" y="0" width="3" height="11" fill="#e6e6e6"/></svg>
<div style="left:138px;top:990px;width:47px;height:27px;background:#121212;box-shadow:0 0 0 1px #181818;"></div>
<span class="t" style="left:141.0px;top:996.0px;font-size:12.5px;color:#eee;">1</span>
<div style="left:188px;top:989px;width:13px;height:28px;background:linear-gradient(#4a4a4a,#3a3a3a);box-shadow:0 0 0 1px #1c1c1c;border-radius:1px;"></div>
<div style="left:203px;top:989px;width:13px;height:28px;background:linear-gradient(#4a4a4a,#3a3a3a);box-shadow:0 0 0 1px #1c1c1c;border-radius:1px;"></div>
<svg style="left:190px;top:998px;" width="11" height="10" viewBox="0 0 11 10"><path d="M6.500 0.500v9L0.500 5z" fill="#e6e6e6"/><rect x="7.500" y="0.500" width="2.500" height="9" fill="#e6e6e6"/></svg>
<svg style="left:205px;top:998px;" width="11" height="10" viewBox="0 0 11 10"><path d="M4.500 0.500v9L10.500 5z" fill="#e6e6e6"/><rect x="1" y="0.500" width="2.500" height="9" fill="#e6e6e6"/></svg>
<svg style="left:0px;top:980px;" width="1920" height="40" viewBox="0 0 1920 40"><path d="M222 25.500H1730" stroke="#c8c8c8" stroke-width="1.200"/><path d="M222.5 21.500V29.500" stroke="#b0b0b0" stroke-width="1.100"/><path d="M243.5 21.500V29.500" stroke="#b0b0b0" stroke-width="1.100"/><path d="M264.4 21.500V29.500" stroke="#b0b0b0" stroke-width="1.100"/><path d="M285.4 21.500V29.500" stroke="#b0b0b0" stroke-width="1.100"/><path d="M306.3 21.500V29.500" stroke="#b0b0b0" stroke-width="1.100"/><path d="M327.3 21.500V29.500" stroke="#b0b0b0" stroke-width="1.100"/><path d="M348.3 21.500V29.500" stroke="#b0b0b0" stroke-width="1.100"/><path d="M369.2 21.500V29.500" stroke="#b0b0b0" stroke-width="1.100"/><path d="M390.2 21.500V29.500" stroke="#b0b0b0" stroke-width="1.100"/><path d="M411.1 21.500V29.500" stroke="#b0b0b0" stroke-width="1.100"/><path d="M432.1 21.500V29.500" stroke="#b0b0b0" stroke-width="1.100"/><path d="M453.1 17.500V33.500" stroke="#d8d8d8" stroke-width="1.300"/><path d="M474.0 21.500V29.500" stroke="#b0b0b0" stroke-width="1.100"/><path d="M495.0 21.500V29.500" stroke="#b0b0b0" stroke-width="1.100"/><path d="M515.9 21.500V29.500" stroke="#b0b0b0" stroke-width="1.100"/><path d="M536.9 21.500V29.500" stroke="#b0b0b0" stroke-width="1.100"/><path d="M557.9 21.500V29.500" stroke="#b0b0b0" stroke-width="1.100"/><path d="M578.8 21.500V29.500" stroke="#b0b0b0" stroke-width="1.100"/><path d="M599.8 21.500V29.500" stroke="#b0b0b0" stroke-width="1.100"/><path d="M620.7 21.500V29.500" stroke="#b0b0b0" stroke-width="1.100"/><path d="M641.7 21.500V29.500" stroke="#b0b0b0" stroke-width="1.100"/><path d="M662.7 21.500V29.500" stroke="#b0b0b0" stroke-width="1.100"/><path d="M683.6 21.500V29.500" stroke="#b0b0b0" stroke-width="1.100"/><path d="M704.6 17.500V33.500" stroke="#d8d8d8" stroke-width="1.300"/><path d="M725.5 21.500V29.500" stroke="#b0b0b0" stroke-width="1.100"/><path d="M746.5 21.500V29.500" stroke="#b0b0b0" stroke-width="1.100"/><path d="M767.5 21.500V29.500" stroke="#b0b0b0" stroke-width="1.100"/><path d="M788.4 21.500V29.500" stroke="#b0b0b0" stroke-width="1.100"/><path d="M809.4 21.500V29.500" stroke="#b0b0b0" stroke-width="1.100"/><path d="M830.3 21.500V29.500" stroke="#b0b0b0" stroke-width="1.100"/><path d="M851.3 21.500V29.500" stroke="#b0b0b0" stroke-width="1.100"/><path d="M872.3 21.500V29.500" stroke="#b0b0b0" stroke-width="1.100"/><path d="M893.2 21.500V29.500" stroke="#b0b0b0" stroke-width="1.100"/><path d="M914.2 21.500V29.500" stroke="#b0b0b0" stroke-width="1.100"/><path d="M935.1 21.500V29.500" stroke="#b0b0b0" stroke-width="1.100"/><path d="M956.1 17.500V33.500" stroke="#d8d8d8" stroke-width="1.300"/><path d="M977.1 21.500V29.500" stroke="#b0b0b0" stroke-width="1.100"/><path d="M998.0 21.500V29.500" stroke="#b0b0b0" stroke-width="1.100"/><path d="M1019.0 21.500V29.500" stroke="#b0b0b0" stroke-width="1.100"/><path d="M1039.9 21.500V29.500" stroke="#b0b0b0" stroke-width="1.100"/><path d="M1060.9 21.500V29.500" stroke="#b0b0b0" stroke-width="1.100"/><path d="M1081.9 21.500V29.500" stroke="#b0b0b0" stroke-width="1.100"/><path d="M1102.8 21.500V29.500" stroke="#b0b0b0" stroke-width="1.100"/><path d="M1123.8 21.500V29.500" stroke="#b0b0b0" stroke-width="1.100"/><path d="M1144.7 21.500V29.500" stroke="#b0b0b0" stroke-width="1.100"/><path d="M1165.7 21.500V29.500" stroke="#b0b0b0" stroke-width="1.100"/><path d="M1186.7 21.500V29.500" stroke="#b0b0b0" stroke-width="1.100"/><path d="M1207.6 17.500V33.500" stroke="#d8d8d8" stroke-width="1.300"/><path d="M1228.6 21.500V29.500" stroke="#b0b0b0" stroke-width="1.100"/><path d="M1249.5 21.500V29.500" stroke="#b0b0b0" stroke-width="1.100"/><path d="M1270.5 21.500V29.500" stroke="#b0b0b0" stroke-width="1.100"/><path d="M1291.5 21.500V29.500" stroke="#b0b0b0" stroke-width="1.100"/><path d="M1312.4 21.500V29.500" stroke="#b0b0b0" stroke-width="1.100"/><path d="M1333.4 21.500V29.500" stroke="#b0b0b0" stroke-width="1.100"/><path d="M1354.3 21.500V29.500" stroke="#b0b0b0" stroke-width="1.100"/><path d="M1375.3 21.500V29.500" stroke="#b0b0b0" stroke-width="1.100"/><path d="M1396.3 21.500V29.500" stroke="#b0b0b0" stroke-width="1.100"/><path d="M1417.2 21.500V29.500" stroke="#b0b0b0" stroke-width="1.100"/><path d="M1438.2 21.500V29.500" stroke="#b0b0b0" stroke-width="1.100"/><path d="M1459.1 17.500V33.500" stroke="#d8d8d8" stroke-width="1.300"/><path d="M1480.1 21.500V29.500" stroke="#b0b0b0" stroke-width="1.100"/><path d="M1501.1 21.500V29.500" stroke="#b0b0b0" stroke-width="1.100"/><path d="M1522.0 21.500V29.500" stroke="#b0b0b0" stroke-width="1.100"/><path d="M1543.0 21.500V29.500" stroke="#b0b0b0" stroke-width="1.100"/><path d="M1563.9 21.500V29.500" stroke="#b0b0b0" stroke-width="1.100"/><path d="M1584.9 21.500V29.500" stroke="#b0b0b0" stroke-width="1.100"/><path d="M1605.9 21.500V29.500" stroke="#b0b0b0" stroke-width="1.100"/><path d="M1626.8 21.500V29.500" stroke="#b0b0b0" stroke-width="1.100"/><path d="M1647.8 21.500V29.500" stroke="#b0b0b0" stroke-width="1.100"/><path d="M1668.7 21.500V29.500" stroke="#b0b0b0" stroke-width="1.100"/><path d="M1689.7 21.500V29.500" stroke="#b0b0b0" stroke-width="1.100"/><path d="M1710.7 17.500V33.500" stroke="#d8d8d8" stroke-width="1.300"/></svg>
<span class="t" style="left:264.9px;top:982.6px;font-size:9.3px;color:#828282;">3</span>
<span class="t" style="left:285.9px;top:982.6px;font-size:9.3px;color:#828282;">4</span>
<span class="t" style="left:306.8px;top:982.6px;font-size:9.3px;color:#828282;">5</span>
<span class="t" style="left:327.8px;top:982.6px;font-size:9.3px;color:#828282;">6</span>
<span class="t" style="left:348.8px;top:982.6px;font-size:9.3px;color:#828282;">7</span>
<span class="t" style="left:369.7px;top:982.6px;font-size:9.3px;color:#828282;">8</span>
<span class="t" style="left:390.7px;top:982.6px;font-size:9.3px;color:#828282;">9</span>
<span class="t" style="left:411.6px;top:982.6px;font-size:9.3px;color:#828282;transform:scaleX(0.9500);">10</span>
<span class="t" style="left:432.6px;top:982.6px;font-size:9.3px;color:#828282;transform:scaleX(0.9500);">11</span>
<span class="t" style="left:453.6px;top:982.6px;font-size:9.3px;color:#c8c8c8;transform:scaleX(0.9500);">12</span>
<span class="t" style="left:474.5px;top:982.6px;font-size:9.3px;color:#828282;transform:scaleX(0.9500);">13</span>
<span class="t" style="left:495.5px;top:982.6px;font-size:9.3px;color:#828282;transform:scaleX(0.9500);">14</span>
<span class="t" style="left:516.4px;top:982.6px;font-size:9.3px;color:#828282;transform:scaleX(0.9500);">15</span>
<span class="t" style="left:537.4px;top:982.6px;font-size:9.3px;color:#828282;transform:scaleX(0.9500);">16</span>
<span class="t" style="left:558.4px;top:982.6px;font-size:9.3px;color:#828282;transform:scaleX(0.9500);">17</span>
<span class="t" style="left:579.3px;top:982.6px;font-size:9.3px;color:#828282;transform:scaleX(0.9500);">18</span>
<span class="t" style="left:600.3px;top:982.6px;font-size:9.3px;color:#828282;transform:scaleX(0.9500);">19</span>
<span class="t" style="left:621.2px;top:982.6px;font-size:9.3px;color:#828282;transform:scaleX(0.9500);">20</span>
<span class="t" style="left:642.2px;top:982.6px;font-size:9.3px;color:#828282;transform:scaleX(0.9500);">21</span>
<span class="t" style="left:663.2px;top:982.6px;font-size:9.3px;color:#828282;transform:scaleX(0.9500);">22</span>
<span class="t" style="left:684.1px;top:982.6px;font-size:9.3px;color:#828282;transform:scaleX(0.9500);">23</span>
<span class="t" style="left:705.1px;top:982.6px;font-size:9.3px;color:#c8c8c8;transform:scaleX(0.9500);">24</span>
<span class="t" style="left:726.0px;top:982.6px;font-size:9.3px;color:#828282;transform:scaleX(0.9500);">25</span>
<span class="t" style="left:747.0px;top:982.6px;font-size:9.3px;color:#828282;transform:scaleX(0.9500);">26</span>
<span class="t" style="left:768.0px;top:982.6px;font-size:9.3px;color:#828282;transform:scaleX(0.9500);">27</span>
<span class="t" style="left:788.9px;top:982.6px;font-size:9.3px;color:#828282;transform:scaleX(0.9500);">28</span>
<span class="t" style="left:809.9px;top:982.6px;font-size:9.3px;color:#828282;transform:scaleX(0.9500);">29</span>
<span class="t" style="left:830.8px;top:982.6px;font-size:9.3px;color:#828282;transform:scaleX(0.9500);">30</span>
<span class="t" style="left:851.8px;top:982.6px;font-size:9.3px;color:#828282;transform:scaleX(0.9500);">31</span>
<span class="t" style="left:872.8px;top:982.6px;font-size:9.3px;color:#828282;transform:scaleX(0.9500);">32</span>
<span class="t" style="left:893.7px;top:982.6px;font-size:9.3px;color:#828282;transform:scaleX(0.9500);">33</span>
<span class="t" style="left:914.7px;top:982.6px;font-size:9.3px;color:#828282;transform:scaleX(0.9500);">34</span>
<span class="t" style="left:935.6px;top:982.6px;font-size:9.3px;color:#828282;transform:scaleX(0.9500);">35</span>
<span class="t" style="left:956.6px;top:982.6px;font-size:9.3px;color:#c8c8c8;transform:scaleX(0.9500);">36</span>
<span class="t" style="left:977.6px;top:982.6px;font-size:9.3px;color:#828282;transform:scaleX(0.9500);">37</span>
<span class="t" style="left:998.5px;top:982.6px;font-size:9.3px;color:#828282;transform:scaleX(0.9500);">38</span>
<span class="t" style="left:1019.5px;top:982.6px;font-size:9.3px;color:#828282;transform:scaleX(0.9500);">39</span>
<span class="t" style="left:1040.4px;top:982.6px;font-size:9.3px;color:#828282;transform:scaleX(0.9500);">40</span>
<span class="t" style="left:1061.4px;top:982.6px;font-size:9.3px;color:#828282;transform:scaleX(0.9500);">41</span>
<span class="t" style="left:1082.4px;top:982.6px;font-size:9.3px;color:#828282;transform:scaleX(0.9500);">42</span>
<span class="t" style="left:1103.3px;top:982.6px;font-size:9.3px;color:#828282;transform:scaleX(0.9500);">43</span>
<span class="t" style="left:1124.3px;top:982.6px;font-size:9.3px;color:#828282;transform:scaleX(0.9500);">44</span>
<span class="t" style="left:1145.2px;top:982.6px;font-size:9.3px;color:#828282;transform:scaleX(0.9500);">45</span>
<span class="t" style="left:1166.2px;top:982.6px;font-size:9.3px;color:#828282;transform:scaleX(0.9500);">46</span>
<span class="t" style="left:1187.2px;top:982.6px;font-size:9.3px;color:#828282;transform:scaleX(0.9500);">47</span>
<span class="t" style="left:1208.1px;top:982.6px;font-size:9.3px;color:#c8c8c8;transform:scaleX(0.9500);">48</span>
<span class="t" style="left:1229.1px;top:982.6px;font-size:9.3px;color:#828282;transform:scaleX(0.9500);">49</span>
<span class="t" style="left:1250.0px;top:982.6px;font-size:9.3px;color:#828282;transform:scaleX(0.9500);">50</span>
<span class="t" style="left:1271.0px;top:982.6px;font-size:9.3px;color:#828282;transform:scaleX(0.9500);">51</span>
<span class="t" style="left:1292.0px;top:982.6px;font-size:9.3px;color:#828282;transform:scaleX(0.9500);">52</span>
<span class="t" style="left:1312.9px;top:982.6px;font-size:9.3px;color:#828282;transform:scaleX(0.9500);">53</span>
<span class="t" style="left:1333.9px;top:982.6px;font-size:9.3px;color:#828282;transform:scaleX(0.9500);">54</span>
<span class="t" style="left:1354.8px;top:982.6px;font-size:9.3px;color:#828282;transform:scaleX(0.9500);">55</span>
<span class="t" style="left:1375.8px;top:982.6px;font-size:9.3px;color:#828282;transform:scaleX(0.9500);">56</span>
<span class="t" style="left:1396.8px;top:982.6px;font-size:9.3px;color:#828282;transform:scaleX(0.9500);">57</span>
<span class="t" style="left:1417.7px;top:982.6px;font-size:9.3px;color:#828282;transform:scaleX(0.9500);">58</span>
<span class="t" style="left:1438.7px;top:982.6px;font-size:9.3px;color:#828282;transform:scaleX(0.9500);">59</span>
<span class="t" style="left:1459.6px;top:982.6px;font-size:9.3px;color:#c8c8c8;transform:scaleX(0.9500);">60</span>
<span class="t" style="left:1480.6px;top:982.6px;font-size:9.3px;color:#828282;transform:scaleX(0.9500);">61</span>
<span class="t" style="left:1501.6px;top:982.6px;font-size:9.3px;color:#828282;transform:scaleX(0.9500);">62</span>
<span class="t" style="left:1522.5px;top:982.6px;font-size:9.3px;color:#828282;transform:scaleX(0.9500);">63</span>
<span class="t" style="left:1543.5px;top:982.6px;font-size:9.3px;color:#828282;transform:scaleX(0.9500);">64</span>
<span class="t" style="left:1564.4px;top:982.6px;font-size:9.3px;color:#828282;transform:scaleX(0.9500);">65</span>
<span class="t" style="left:1585.4px;top:982.6px;font-size:9.3px;color:#828282;transform:scaleX(0.9500);">66</span>
<span class="t" style="left:1606.4px;top:982.6px;font-size:9.3px;color:#828282;transform:scaleX(0.9500);">67</span>
<span class="t" style="left:1627.3px;top:982.6px;font-size:9.3px;color:#828282;transform:scaleX(0.9500);">68</span>
<span class="t" style="left:1648.3px;top:982.6px;font-size:9.3px;color:#828282;transform:scaleX(0.9500);">69</span>
<span class="t" style="left:1669.2px;top:982.6px;font-size:9.3px;color:#828282;transform:scaleX(0.9500);">70</span>
<span class="t" style="left:1690.2px;top:982.6px;font-size:9.3px;color:#828282;transform:scaleX(0.9500);">71</span>
<span class="t" style="left:1711.2px;top:982.6px;font-size:9.3px;color:#c8c8c8;transform:scaleX(0.9500);">72</span>
<svg style="left:221px;top:982px;" width="30" height="25" viewBox="0 0 30 25"><path d="M2.500 1.500H27.500V18.500H8L2.500 23.500z" fill="#000" stroke="#e8e8e8" stroke-width="1.300"/></svg>
<span class="t" style="left:232.9px;top:985.7px;font-size:13px;color:#fff;">1</span>
<div style="left:-8px;top:1026px;width:26px;height:24px;background:linear-gradient(#4a4a4a,#3a3a3a);box-shadow:0 0 0 1px #1c1c1c;border-radius:1px;"></div>
<div style="left:20px;top:1026px;width:26px;height:24px;background:linear-gradient(#4a4a4a,#3a3a3a);box-shadow:0 0 0 1px #1c1c1c;border-radius:1px;"></div>
<div style="left:48px;top:1026px;width:27px;height:24px;background:linear-gradient(#4a4a4a,#3a3a3a);box-shadow:0 0 0 1px #1c1c1c;border-radius:1px;"></div>
<div style="left:77px;top:1026px;width:26px;height:24px;background:linear-gradient(#6684ab,#5b799f);box-shadow:0 0 0 1px #1c1c1c;border-radius:1px;"></div>
<div style="left:104px;top:1026px;width:28px;height:24px;background:linear-gradient(#4a4a4a,#3a3a3a);box-shadow:0 0 0 1px #1c1c1c;border-radius:1px;"></div>
<div style="left:134px;top:1026px;width:26px;height:24px;background:linear-gradient(#4a4a4a,#3a3a3a);box-shadow:0 0 0 1px #1c1c1c;border-radius:1px;"></div>
<div style="left:166px;top:1026px;width:23px;height:24px;background:linear-gradient(#4a4a4a,#3a3a3a);box-shadow:0 0 0 1px #1c1c1c;border-radius:1px;"></div>
<div style="left:190px;top:1026px;width:23px;height:24px;background:linear-gradient(#4a4a4a,#3a3a3a);box-shadow:0 0 0 1px #1c1c1c;border-radius:1px;"></div>
<svg style="left:0px;top:1029px;" width="16" height="19" viewBox="0 0 16 19"><rect x="0" y="1" width="12" height="2" fill="#ddd"/><rect x="0" y="5" width="9" height="9" fill="#ddd"/><path d="M6 8l8 6-3.500.5 2 3.500-1.600.8-2-3.600L6 17z" fill="#fff" stroke="#222" stroke-width="0.800"/></svg>
<svg style="left:25px;top:1028px;" width="18" height="20" viewBox="0 0 18 20"><path d="M2 7.500h3l4-4v13l-4-4H2z" fill="#aaa"/><path d="M10.500 2.500c5 2.500 5 12.500 0 15" fill="none" stroke="#ddd" stroke-width="1.400"/><path d="M10 5.500c3 2 3 7 0 9" fill="none" stroke="#ddd" stroke-width="1.200"/><ellipse cx="9.500" cy="10" rx="3" ry="7.500" fill="none" stroke="#888" stroke-width="0.800"/></svg>
<svg style="left:52px;top:1030px;" width="22" height="19" viewBox="0 0 22 19"><path d="M3 11c1-7 12-8 14-1" fill="none" stroke="#eee" stroke-width="1.700"/><path d="M1 3.500l2.500 6 5-3z" fill="#eee"/><rect x="3" y="12" width="14" height="2.400" rx="1" fill="#eee"/><path d="M14 15h6l-3 3.500z" fill="#777"/></svg>
<svg style="left:81px;top:1029px;" width="19" height="19" viewBox="0 0 19 19"><circle cx="9.500" cy="9.500" r="7.700" fill="#f4f4f4" stroke="#1c1c1c" stroke-width="1.500"/><circle cx="9.500" cy="9.500" r="5.500" fill="none" stroke="#1c1c1c" stroke-width="0.900"/><path d="M9.500 5v4.500H13" stroke="#1c1c1c" stroke-width="1.400" fill="none"/></svg>
<svg style="left:109px;top:1031px;" width="22" height="16" viewBox="0 0 22 16"><path d="M2 3v7M5 3v3M8 3v3M11 3v3M14 3v3M17 3v10" stroke="#c4c4c4" stroke-width="1.400"/><path d="M18.500 10l3.500 3-3.500 3z" fill="#888"/></svg>
<svg style="left:139px;top:1034px;" width="18" height="9" viewBox="0 0 18 9"><path d="M0.500 4.500h17" stroke="#aaa" stroke-width="1.100"/><circle cx="10" cy="4.500" r="2.800" fill="#ddd"/><path d="M3 3v3" stroke="#aaa"/></svg>
<svg style="left:171px;top:1033px;" width="14" height="10" viewBox="0 0 14 10"><path d="M12.500 0.500v9L5 5z" fill="#4e584e"/><rect x="2" y="0.500" width="2.200" height="9" fill="#4e584e"/></svg>
<svg style="left:195px;top:1033px;" width="14" height="10" viewBox="0 0 14 10"><path d="M1.500 0.500v9L9 5z" fill="#4e584e"/><rect x="10" y="0.500" width="2.200" height="9" fill="#4e584e"/></svg>
<div style="left:163px;top:1027px;width:1px;height:22px;background:#444;"></div>
<div style="left:225px;top:1028px;width:42px;height:22px;background:#1c1c1c;box-shadow:0 0 0 1px #262626;"></div>
<div style="left:272px;top:1028px;width:42px;height:22px;background:#1c1c1c;box-shadow:0 0 0 1px #262626;"></div>
<span class="t" style="left:228.0px;top:1031.9px;font-size:12.5px;color:#eee;">1</span>
<span class="t" style="left:275.0px;top:1031.9px;font-size:12.5px;color:#eee;">1</span>
<div style="left:321px;top:1037px;width:1311px;height:3px;background:#8a8a8a;border-radius:1px;"></div>
<svg style="left:316px;top:1033px;" width="7" height="11" viewBox="0 0 7 11"><path d="M0.500 0.500L6.500 5.500 0.500 10.500z" fill="#bbb"/></svg>
<svg style="left:1629px;top:1033px;" width="7" height="11" viewBox="0 0 7 11"><path d="M6.500 0.500L0.500 5.500 6.500 10.500z" fill="#bbb"/></svg>
<div style="left:1640px;top:1028px;width:42px;height:22px;background:#1c1c1c;box-shadow:0 0 0 1px #262626;"></div>
<div style="left:1687px;top:1028px;width:42px;height:22px;background:#1c1c1c;box-shadow:0 0 0 1px #262626;"></div>
<span class="t" style="left:1643.0px;top:1031.9px;font-size:12.5px;color:#eee;">72</span>
<span class="t" style="left:1690.0px;top:1031.9px;font-size:12.5px;color:#eee;">72</span>
<div style="left:1735px;top:996px;width:41px;height:41px;background:radial-gradient(#3c3c3c 60%,#343434 100%);border-radius:50%;box-shadow:0 0 0 1px #2a2a2a;"></div>
<svg style="left:1745px;top:1007px;" width="20" height="20" viewBox="0 0 20 20"><circle cx="13.500" cy="6.500" r="3.800" fill="none" stroke="#555" stroke-width="2"/><path d="M10.500 9.500L3.500 16.500M5 15l2 2M7.500 12.500l2 2" stroke="#555" stroke-width="2"/></svg>
<div style="left:1774px;top:1006px;width:16px;height:20px;background:linear-gradient(#454545,#393939);box-shadow:0 0 0 1px #222;border-radius:2px;"></div>
<svg style="left:1778px;top:1012px;" width="8" height="7" viewBox="0 0 8 7"><path d="M0.500 0.500h7L4 6z" fill="#aaa"/></svg>
<div style="left:1800px;top:990px;width:23px;height:23px;background:linear-gradient(#4a4a4a,#3a3a3a);box-shadow:0 0 0 1px #1c1c1c;border-radius:1px;"></div>
<div style="left:1800px;top:1021px;width:23px;height:23px;background:linear-gradient(#4a4a4a,#3a3a3a);box-shadow:0 0 0 1px #1c1c1c;border-radius:1px;"></div>
<svg style="left:1803px;top:993px;" width="18" height="18" viewBox="0 0 18 18"><rect x="1" y="1" width="14" height="14" fill="none" stroke="#ddd" stroke-width="1.200"/><path d="M4.500 8.500a4 4 0 0 1 7-2.500" stroke="#ddd" fill="none" stroke-width="1.300"/><path d="M12.500 3v3.500h-3.500z" fill="#ddd"/><path d="M11.500 8.500a4 4 0 0 1-7 2" stroke="#e06040" fill="none" stroke-width="1.300"/><path d="M13 13l4 3-4 2z" fill="#888"/></svg>
<svg style="left:1803px;top:1024px;" width="18" height="17" viewBox="0 0 18 17"><rect x="1" y="1" width="15" height="14" fill="#111" stroke="#ddd" stroke-width="1.200"/><path d="M2 8h13" stroke="#aaa" stroke-width="0.800"/><path d="M2 10c3-8 5-8 7-2s4 4 6-3" stroke="#50b0f0" fill="none" stroke-width="1.200"/><path d="M2 6c3 6 6 6 8 1s4-1 5 3" stroke="#f05050" fill="none" stroke-width="1"/></svg>
<div style="left:1830px;top:990px;width:95px;height:23px;background:linear-gradient(#484848,#3a3a3a);box-shadow:0 0 0 1px #1c1c1c;border-radius:2px;"></div>
<div style="left:1828px;top:1021px;width:95px;height:23px;background:linear-gradient(#484848,#3a3a3a);box-shadow:0 0 0 1px #1c1c1c;border-radius:2px;"></div>
<span class="t" style="left:1847.0px;top:995.3px;font-size:11.6px;color:#d0d0d0;transform:scaleX(0.9350);">0 keys, 0/0 channels</span>
<span class="t" style="left:1842.0px;top:1025.8px;font-size:11.6px;color:#d0d0d0;transform:scaleX(0.9600);">Key All Channels</span>
<div style="left:0px;top:1055px;width:1920px;height:25px;background:#1b1b1b;"></div>
<div style="left:1656px;top:1055.5px;width:51px;height:25px;background:linear-gradient(#3a3a3a,#2e2e2e);"></div>
<svg style="left:1658px;top:1060px;" width="20" height="16" viewBox="0 0 20 16"><circle cx="9" cy="8" r="2.200" fill="#d08a30"/><path d="M5 3.500c-3 2.500-3 6.500 0 9M13 3.500c3 2.500 3 6.500 0 9" stroke="#777" fill="none" stroke-width="1.200"/><path d="M14 11l4 3-4 2z" fill="#666"/></svg>
<svg style="left:1682px;top:1059px;" width="22" height="18" viewBox="0 0 22 18"><path d="M3 7c0-4 4-5.500 7-4.500 4-1 8 2 6 6 0 3-3 4-5 3.500-3 1-5.500 0-5.500-2C3 9.500 3 8.500 3 7z" fill="#ddd"/><path d="M16 12l4 3-4 2z" fill="#777"/></svg>
<div style="left:1708px;top:1055.5px;width:110px;height:25px;background:linear-gradient(#464646,#383838);"></div>
<span class="t" style="left:1724.0px;top:1061.5px;font-size:11.8px;color:#c8c8c8;transform:scaleX(1.0890);">/obj/gumballs/...</span>
<div style="left:1818px;top:1055.5px;width:23px;height:25px;background:linear-gradient(#343434,#2a2a2a);"></div>
<svg style="left:1825px;top:1060px;" width="8" height="16" viewBox="0 0 8 16"><path d="M4 1.500L7 6.500H1zM4 14.500L7 9.500H1z" fill="#8a8a8a"/></svg>
<div style="left:1842px;top:1055.5px;width:29px;height:25px;background:linear-gradient(#363636,#2c2c2c);"></div>
<svg style="left:1848px;top:1060px;" width="17" height="16" viewBox="0 0 17 16"><path d="M2.500 7a6 6 0 0 1 10.500-3" stroke="#555" fill="none" stroke-width="1.800"/><path d="M14.500 1.500v5h-5z" fill="#555"/><path d="M14.500 9a6 6 0 0 1-10.500 3" stroke="#555" fill="none" stroke-width="1.800"/><path d="M2.500 14.500v-5h5z" fill="#555"/></svg>
<div style="left:1872px;top:1055.5px;width:50px;height:25px;background:linear-gradient(#464646,#383838);box-shadow:0 0 0 1px #1c1c1c;"></div>
<span class="t" style="left:1888.0px;top:1061.5px;font-size:11.6px;color:#d0d0d0;transform:scaleX(0.9500);">Auto Update</span>
<svg style="left:0px;top:0px;pointer-events:none;" width="1200" height="1000" viewBox="0 0 1200 1000"><defs>
<linearGradient id="gb" gradientUnits="userSpaceOnUse" x1="420" y1="720" x2="760" y2="561">
<stop offset="0" stop-color="#140a00"/><stop offset="0.15" stop-color="#180c00"/><stop offset="0.2" stop-color="#2a1700"/><stop offset="0.3" stop-color="#432800"/><stop offset="0.5" stop-color="#563300"/><stop offset="0.72" stop-color="#643d00"/><stop offset="0.96" stop-color="#6f4500"/></linearGradient>
<linearGradient id="gi" gradientUnits="userSpaceOnUse" x1="470" y1="520" x2="720" y2="400">
<stop offset="0" stop-color="#5e3a00"/><stop offset="0.3" stop-color="#533300"/><stop offset="0.52" stop-color="#432900"/><stop offset="0.66" stop-color="#2a1800"/><stop offset="0.76" stop-color="#140900"/><stop offset="1" stop-color="#120800"/></linearGradient>
<linearGradient id="gd" gradientUnits="userSpaceOnUse" x1="440" y1="640" x2="560" y2="560">
<stop offset="0" stop-color="#140a00"/><stop offset="0.55" stop-color="#1c0f00" stop-opacity="0.85"/><stop offset="1" stop-color="#2a1700" stop-opacity="0"/></linearGradient>
<radialGradient id="gl" gradientUnits="userSpaceOnUse" cx="535" cy="565" r="75"><stop offset="0" stop-color="#704600" stop-opacity=".75"/><stop offset="1" stop-color="#704600" stop-opacity="0"/></radialGradient><clipPath id="ci"><polygon points="602.0,360.0 661.5,372.5 706.0,406.0 731.0,454.0 731.0,507.5 704.0,555.0 653.0,589.5 587.5,600.0 523.0,586.0 477.0,546.0 456.0,494.5 462.5,440.0 494.0,395.5 544.0,366.5"/></clipPath>
</defs><polygon points="421.0,497.0 417.0,540.0 414.6,611.0 427.0,654.0 452.0,721.0 517.0,779.0 587.5,801.7 654.0,789.6 729.0,733.0 762.5,667.0 772.5,627.0 772.5,540.0 770.0,500.0 766.0,446.5 604.0,400.0" fill="url(#gb)"/><polygon points="421,497 449,561 444,640 448,712 427,654 414.600,611 417,540" fill="#150a00"/><polygon points="448,712 470,728 524,768 587.500,793 587.500,801.700 517,779 452,721" fill="#170c00" opacity="0.9"/><polygon points="587.500,795 654,783 654,789.600 587.500,801.700" fill="#2a1800" opacity="0.8"/><polygon points="604.0,329.0 676.0,346.0 733.0,387.0 766.0,446.5 768.5,511.0 732.0,575.0 665.5,616.5 585.5,629.0 507.0,609.0 449.0,561.0 421.0,497.0 429.0,430.0 469.0,376.0 531.0,339.0" fill="#7a4d00"/><polygon points="602.0,360.0 661.5,372.5 706.0,406.0 731.0,454.0 731.0,507.5 704.0,555.0 653.0,589.5 587.5,600.0 523.0,586.0 477.0,546.0 456.0,494.5 462.5,440.0 494.0,395.5 544.0,366.5" fill="url(#gi)"/><rect x="440" y="470" width="200" height="140" fill="url(#gl)" clip-path="url(#ci)"/><polygon points="535.400,584.200 556.300,573.800 600,566.500 643.800,578 656.300,584.200 653,589.500 587.500,600 537.500,588.300" fill="#7a4c00"/><polygon points="556.300,573.800 600,566.500 643.800,578 600,590" fill="#7f5000"/><path d="M604 329L602 360" stroke="#643e00" stroke-width="0.900"/><path d="M676 346L661.5 372.5" stroke="#643e00" stroke-width="0.900"/><path d="M733 387L706 406" stroke="#643e00" stroke-width="0.900"/><path d="M766 446.5L731 454" stroke="#643e00" stroke-width="0.900"/><path d="M768.5 511L731 507.5" stroke="#643e00" stroke-width="0.900"/><path d="M732 575L704 555" stroke="#643e00" stroke-width="0.900"/><path d="M665.5 616.5L653 589.5" stroke="#643e00" stroke-width="0.900"/><path d="M585.5 629L587.5 600" stroke="#643e00" stroke-width="0.900"/><path d="M507 609L523 586" stroke="#643e00" stroke-width="0.900"/><path d="M449 561L477 546" stroke="#643e00" stroke-width="0.900"/><path d="M421 497L456 494.5" stroke="#643e00" stroke-width="0.900"/><path d="M429 430L462.5 440" stroke="#643e00" stroke-width="0.900"/><path d="M469 376L494 395.5" stroke="#643e00" stroke-width="0.900"/><path d="M531 339L544 366.5" stroke="#643e00" stroke-width="0.900"/><path d="M585.500 629V801M665.500 616.500L668 700 667 780M732 575L736 650 729 733" stroke="#4a2c00" stroke-width="0.900" fill="none" opacity="0.6"/><path d="M587 690C620 688 650 680 668 672 700 660 740 625 765 590M587 745C620 745 650 738 668 732 700 715 735 690 755 665" stroke="#4a2c00" stroke-width="0.900" fill="none" opacity="0.45"/><path d="M602 360L600 566M661.500 372.500L668 520M706 406L712 540M604 408C640 420 690 440 728 480M604 460C640 470 680 490 715 535" stroke="#3a2608" stroke-width="0.900" fill="none" opacity="0.5"/></svg>
<svg style="left:1207px;top:198px;" width="713" height="781" viewBox="1207 198 713 781"><rect x="1372" y="272.500" width="280" height="153" rx="3" fill="#20477a"/><path d="M1372 287V275.500a3 3 0 0 1 3-3h274a3 3 0 0 1 3 3V287z" fill="#265fa8"/><rect x="1377" y="278.300" width="6.500" height="1.300" fill="#0c2040"/><rect x="1372" y="458" width="280" height="364" rx="3" fill="#403866"/><path d="M1372 472.500V461a3 3 0 0 1 3-3h274a3 3 0 0 1 3 3V472.500z" fill="#4a3f8c"/><rect x="1377" y="463.800" width="6.500" height="1.300" fill="#15102c"/><rect x="1686.500" y="272.700" width="109.500" height="119.500" rx="3.500" fill="#c5bb61"/><path d="M1686.500 283.500V275.200a3.500 3.500 0 0 1 3.500-3.500h102.500a3.500 3.500 0 0 1 3.500 3.500V283.500z" fill="#e6de78"/><rect x="1690" y="276.500" width="8" height="1.300" fill="#3a3410"/><path d="M1411.300 313V329M1568.300 313V329" stroke="#3a78c8" stroke-width="1.300"/><path d="M1411.300 360c0 8 4 10 12 10l48 1.500c8 0.500 12 3 16 6.500" fill="none" stroke="#3a78c8" stroke-width="1.300"/><path d="M1568.300 360c0 8-4 10.500-14 11l-36 2.500c-8 0.500-12 2-15 4.500" fill="none" stroke="#4a78b0" stroke-width="1.200" stroke-dasharray="1.500 2.500"/><path d="M1495.800 413L1498 460 1501.700 492" fill="none" stroke="#5a8ad0" stroke-width="1.100"/><circle cx="1501.700" cy="590" r="27.500" fill="#4a5aae"/><circle cx="1501.700" cy="590" r="17" fill="#6a4cb4"/><path d="M1501.700 513V536" stroke="#8a86b8" stroke-width="1.100"/><path d="M1501.700 556.500L1492.800 579" stroke="#9a96c8" stroke-width="1" opacity=".8"/><path d="M1501.700 600.3V622.7" stroke="#8a86b8" stroke-width="1" fill="none"/><path d="M1501.700 643.7V647.2L1492.800 666.2" stroke="#8a86b8" stroke-width="1" fill="none"/><path d="M1501.700 687.2V690.7L1492.800 709.9" stroke="#8a86b8" stroke-width="1" fill="none"/><path d="M1501.700 730.9V734.4L1492.800 753.5" stroke="#8a86b8" stroke-width="1" fill="none"/><path d="M1501.700 774.5V778.0L1492.800 797.2" stroke="#8a86b8" stroke-width="1" fill="none"/><path d="M1501.700 818.2L1492.800 840.8" stroke="#6498d8" stroke-width="1.050" fill="none"/><path d="M1501.700 861.500V884" stroke="#6498d8" stroke-width="1.100" fill="none"/><rect x="1479.2" y="495.2" width="45" height="14" rx="1.800" fill="#dcdcdc" stroke="#8c8c8c" stroke-width="0.700"/><path d="M1484.5 496.2L1482 508.2" stroke="#a9a9a9" stroke-width="1.800"/><path d="M1490.2 496.2L1487.7 508.2" stroke="#a9a9a9" stroke-width="1.800"/><path d="M1511.5 496.2L1509 508.2" stroke="#a9a9a9" stroke-width="1.800"/><path d="M1517.2 496.2L1514.7 508.2" stroke="#a9a9a9" stroke-width="1.800"/><path d="M1522.5 496.2L1520 508.2" stroke="#a9a9a9" stroke-width="1.800"/><g transform="translate(1495.200,495.7)"><path d="M2 3l5-2 5 2-1 5-4 4-4-4z" fill="#f0a020"/><path d="M7 1l5 2-5 2z" fill="#f8c860"/><circle cx="6.500" cy="6" r="1.500" fill="#fff2c0"/></g><circle cx="1501.7" cy="491.7" r="2.5" fill="#b8b8c0"/><circle cx="1501.7" cy="512.7" r="2.5" fill="#b8b8c0"/><rect x="1479.2" y="539.1" width="45" height="14" rx="1.800" fill="#dcdcdc" stroke="#8c8c8c" stroke-width="0.700"/><path d="M1484.5 540.1L1482 552.1" stroke="#a9a9a9" stroke-width="1.800"/><path d="M1490.2 540.1L1487.7 552.1" stroke="#a9a9a9" stroke-width="1.800"/><path d="M1511.5 540.1L1509 552.1" stroke="#a9a9a9" stroke-width="1.800"/><path d="M1517.2 540.1L1514.7 552.1" stroke="#a9a9a9" stroke-width="1.800"/><path d="M1522.5 540.1L1520 552.1" stroke="#a9a9a9" stroke-width="1.800"/><g transform="translate(1495.200,539.6)"><path d="M1 9l6-3 6 3-6 3z" fill="#8890a0"/><path d="M3 7l4-2.500L11 7 7 9z" fill="#e05050"/><path d="M5 5.500l2-1.500 2 1.500-2 1z" fill="#f8a0a0"/></g><circle cx="1501.7" cy="535.6" r="2.5" fill="#b8b8c0"/><circle cx="1501.7" cy="556.6" r="2.5" fill="#b8b8c0"/><rect x="1479.2" y="582.8" width="45" height="14" rx="1.800" fill="#dcdcdc" stroke="#8c8c8c" stroke-width="0.700"/><path d="M1484.5 583.8L1482 595.8" stroke="#a9a9a9" stroke-width="1.800"/><path d="M1490.2 583.8L1487.7 595.8" stroke="#a9a9a9" stroke-width="1.800"/><path d="M1511.5 583.8L1509 595.8" stroke="#a9a9a9" stroke-width="1.800"/><path d="M1517.2 583.8L1514.7 595.8" stroke="#a9a9a9" stroke-width="1.800"/><path d="M1522.5 583.8L1520 595.8" stroke="#a9a9a9" stroke-width="1.800"/><rect x="1517.500" y="583.3" width="6.200" height="13" rx="1" fill="#18a4f4"/><g transform="translate(1495.200,583.3)"><path d="M1 2l5-1 4 3-1 5-5 1-3-4z" fill="#f0a828"/><path d="M3.500 3.500l3-.5 2 2-.8 2.800-2.700.5-1.800-2.300z" fill="#fce6b0"/><path d="M8 8l4 3-2 1z" fill="#a05018"/><path d="M1 2l1.500 4" stroke="#a05018"/></g><circle cx="1492.8" cy="579.0" r="2.2" fill="#b8b8c0"/><circle cx="1510.3" cy="579.0" r="2.2" fill="#b8b8c0"/><circle cx="1501.7" cy="600.3" r="2.5" fill="#b8b8c0"/><rect x="1479.2" y="626.2" width="45" height="14" rx="1.800" fill="#dcdcdc" stroke="#8c8c8c" stroke-width="0.700"/><path d="M1484.5 627.2L1482 639.2" stroke="#a9a9a9" stroke-width="1.800"/><path d="M1490.2 627.2L1487.7 639.2" stroke="#a9a9a9" stroke-width="1.800"/><path d="M1511.5 627.2L1509 639.2" stroke="#a9a9a9" stroke-width="1.800"/><path d="M1517.2 627.2L1514.7 639.2" stroke="#a9a9a9" stroke-width="1.800"/><path d="M1522.5 627.2L1520 639.2" stroke="#a9a9a9" stroke-width="1.800"/><g transform="translate(1495.200,626.7)"><rect x="2" y="2.500" width="9.500" height="8.500" rx="1" fill="#e89868"/><rect x="4" y="4.500" width="5.500" height="4.500" fill="#c86838"/></g><circle cx="1501.7" cy="622.7" r="2.5" fill="#b8b8c0"/><circle cx="1501.7" cy="643.7" r="2.5" fill="#b8b8c0"/><rect x="1479.2" y="669.7" width="45" height="14" rx="1.800" fill="#dcdcdc" stroke="#8c8c8c" stroke-width="0.700"/><path d="M1484.5 670.7L1482 682.7" stroke="#a9a9a9" stroke-width="1.800"/><path d="M1490.2 670.7L1487.7 682.7" stroke="#a9a9a9" stroke-width="1.800"/><path d="M1511.5 670.7L1509 682.7" stroke="#a9a9a9" stroke-width="1.800"/><path d="M1517.2 670.7L1514.7 682.7" stroke="#a9a9a9" stroke-width="1.800"/><path d="M1522.5 670.7L1520 682.7" stroke="#a9a9a9" stroke-width="1.800"/><g transform="translate(1495.200,670.2)"><path d="M1.500 8.500a3 3 0 0 1 5.500-1.500v5h-5.500z" fill="#e0c030"/><circle cx="9.500" cy="3.500" r="3" fill="#3a78c0"/><path d="M5 6l3 5H3z" fill="#2a6838"/></g><circle cx="1492.8" cy="665.9000000000001" r="2.2" fill="#b8b8c0"/><circle cx="1510.3" cy="665.9000000000001" r="2.2" fill="#b8b8c0"/><circle cx="1501.7" cy="687.2" r="2.5" fill="#b8b8c0"/><rect x="1479.2" y="713.4" width="45" height="14" rx="1.800" fill="#dcdcdc" stroke="#8c8c8c" stroke-width="0.700"/><path d="M1484.5 714.4L1482 726.4" stroke="#a9a9a9" stroke-width="1.800"/><path d="M1490.2 714.4L1487.7 726.4" stroke="#a9a9a9" stroke-width="1.800"/><path d="M1511.5 714.4L1509 726.4" stroke="#a9a9a9" stroke-width="1.800"/><path d="M1517.2 714.4L1514.7 726.4" stroke="#a9a9a9" stroke-width="1.800"/><path d="M1522.5 714.4L1520 726.4" stroke="#a9a9a9" stroke-width="1.800"/><g transform="translate(1495.200,713.9)"><path d="M1.500 4l5-2.500 5.500 2v6l-5.500 3-5-2.500z" fill="#f0b030"/><path d="M1.500 4l5 2 5.500-2.500-5.500-2z" fill="#fcd870"/><path d="M6.500 6v6.500" stroke="#b07010" stroke-width=".8"/></g><circle cx="1492.8" cy="709.6" r="2.2" fill="#b8b8c0"/><circle cx="1510.3" cy="709.6" r="2.2" fill="#b8b8c0"/><circle cx="1501.7" cy="730.9" r="2.5" fill="#b8b8c0"/><rect x="1479.2" y="757.0" width="45" height="14" rx="1.800" fill="#dcdcdc" stroke="#8c8c8c" stroke-width="0.700"/><path d="M1484.5 758.0L1482 770.0" stroke="#a9a9a9" stroke-width="1.800"/><path d="M1490.2 758.0L1487.7 770.0" stroke="#a9a9a9" stroke-width="1.800"/><path d="M1511.5 758.0L1509 770.0" stroke="#a9a9a9" stroke-width="1.800"/><path d="M1517.2 758.0L1514.7 770.0" stroke="#a9a9a9" stroke-width="1.800"/><path d="M1522.5 758.0L1520 770.0" stroke="#a9a9a9" stroke-width="1.800"/><g transform="translate(1495.200,757.5)"><path d="M1.500 4l5-2.500 5.500 2v6l-5.500 3-5-2.500z" fill="#f0b030"/><path d="M1.500 4l5 2 5.500-2.500-5.500-2z" fill="#fcd870"/><path d="M6.500 6v6.500" stroke="#b07010" stroke-width=".8"/></g><circle cx="1492.8" cy="753.2" r="2.2" fill="#b8b8c0"/><circle cx="1510.3" cy="753.2" r="2.2" fill="#b8b8c0"/><circle cx="1501.7" cy="774.5" r="2.5" fill="#b8b8c0"/><rect x="1479.2" y="800.7" width="45" height="14" rx="1.800" fill="#dcdcdc" stroke="#8c8c8c" stroke-width="0.700"/><path d="M1484.5 801.7L1482 813.7" stroke="#a9a9a9" stroke-width="1.800"/><path d="M1490.2 801.7L1487.7 813.7" stroke="#a9a9a9" stroke-width="1.800"/><path d="M1511.5 801.7L1509 813.7" stroke="#a9a9a9" stroke-width="1.800"/><path d="M1517.2 801.7L1514.7 813.7" stroke="#a9a9a9" stroke-width="1.800"/><path d="M1522.5 801.7L1520 813.7" stroke="#a9a9a9" stroke-width="1.800"/><g transform="translate(1495.200,801.2)"><ellipse cx="6.500" cy="7" rx="5" ry="3.200" fill="none" stroke="#d06060" stroke-width="1.300"/><path d="M3 6c2-2 5-2 7 0" stroke="#e8a0a0" fill="none"/></g><circle cx="1492.8" cy="796.9000000000001" r="2.2" fill="#b8b8c0"/><circle cx="1510.3" cy="796.9000000000001" r="2.2" fill="#b8b8c0"/><circle cx="1501.7" cy="818.2" r="2.5" fill="#b8b8c0"/><rect x="1479.2" y="844.3" width="45" height="14" rx="1.800" fill="#dcdcdc" stroke="#8c8c8c" stroke-width="0.700"/><path d="M1484.5 845.3L1482 857.3" stroke="#a9a9a9" stroke-width="1.800"/><path d="M1490.2 845.3L1487.7 857.3" stroke="#a9a9a9" stroke-width="1.800"/><path d="M1511.5 845.3L1509 857.3" stroke="#a9a9a9" stroke-width="1.800"/><path d="M1517.2 845.3L1514.7 857.3" stroke="#a9a9a9" stroke-width="1.800"/><path d="M1522.5 845.3L1520 857.3" stroke="#a9a9a9" stroke-width="1.800"/><g transform="translate(1495.200,844.8)"><rect x="1.500" y="3" width="6" height="7.500" fill="#8ab870"/><rect x="6" y="5" width="5.500" height="5.500" fill="#c8d8a0" stroke="#6a8a50" stroke-width=".6"/></g><circle cx="1492.8" cy="840.5" r="2.2" fill="#b8b8c0"/><circle cx="1510.3" cy="840.5" r="2.2" fill="#b8b8c0"/><circle cx="1501.7" cy="861.8" r="2.5" fill="#b8b8c0"/><path d="M1388.3 293.5l17.500 3.200h11l17.500-3.200v13.500l-17.500 3.500h-11l-17.500-3.500z" fill="#f2b830" stroke="#a07410" stroke-width=".6"/><path d="M1393.1 295.5L1391.5 307.5" stroke="#c08c14" stroke-width="1.700"/><path d="M1397.6 295.5L1396.0 307.5" stroke="#c08c14" stroke-width="1.700"/><path d="M1402.1 295.5L1400.5 307.5" stroke="#c08c14" stroke-width="1.700"/><path d="M1422.1 295.5L1420.5 307.5" stroke="#c08c14" stroke-width="1.700"/><path d="M1426.6 295.5L1425.0 307.5" stroke="#c08c14" stroke-width="1.700"/><path d="M1431.1 295.5L1429.5 307.5" stroke="#c08c14" stroke-width="1.700"/><rect x="1408.0" y="296" width="6.600" height="9.500" rx="1.500" fill="#b0b0b0"/><ellipse cx="1411.3" cy="296.7" rx="3.300" ry="1.300" fill="#e0e0e0"/><rect x="1408.0" y="296.5" width="2" height="9" fill="#888"/><circle cx="1411.3" cy="292.5" r="2.5" fill="#b8b8c0"/><circle cx="1411.3" cy="313" r="2.5" fill="#b8b8c0"/><path d="M1545.3 293.5l17.500 3.200h11l17.500-3.200v13.500l-17.500 3.500h-11l-17.500-3.500z" fill="#f01414" stroke="#900808" stroke-width=".6"/><path d="M1550.1 295.5L1548.5 307.5" stroke="#c00c0c" stroke-width="1.700"/><path d="M1554.6 295.5L1553.0 307.5" stroke="#c00c0c" stroke-width="1.700"/><path d="M1559.1 295.5L1557.5 307.5" stroke="#c00c0c" stroke-width="1.700"/><path d="M1579.1 295.5L1577.5 307.5" stroke="#c00c0c" stroke-width="1.700"/><path d="M1583.6 295.5L1582.0 307.5" stroke="#c00c0c" stroke-width="1.700"/><path d="M1588.1 295.5L1586.5 307.5" stroke="#c00c0c" stroke-width="1.700"/><rect x="1565.0" y="296" width="6.600" height="9.500" rx="1.500" fill="#b0b0b0"/><ellipse cx="1568.3" cy="296.7" rx="3.300" ry="1.300" fill="#e0e0e0"/><rect x="1565.0" y="296.5" width="2" height="9" fill="#888"/><circle cx="1568.3" cy="292.5" r="2.5" fill="#b8b8c0"/><circle cx="1568.3" cy="313" r="2.5" fill="#b8b8c0"/><rect x="1388.3" y="339.5" width="46" height="10.500" rx="1" fill="#f2b830" stroke="#a07410" stroke-width=".6"/><path d="M1391.8 340.5V349.5" stroke="#c08c14" stroke-width="1.500"/><path d="M1395.8 340.5V349.5" stroke="#c08c14" stroke-width="1.500"/><path d="M1399.8 340.5V349.5" stroke="#c08c14" stroke-width="1.500"/><path d="M1422.8 340.5V349.5" stroke="#c08c14" stroke-width="1.500"/><path d="M1426.8 340.5V349.5" stroke="#c08c14" stroke-width="1.500"/><path d="M1430.8 340.5V349.5" stroke="#c08c14" stroke-width="1.500"/><polygon points="1411.3,332.7 1413.6,337.9 1418.5,335.0 1417.4,340.6 1423.0,341.2 1418.8,345.0 1423.0,348.8 1417.4,349.4 1418.5,355.0 1413.6,352.1 1411.3,357.3 1409.0,352.1 1404.1,355.0 1405.2,349.4 1399.6,348.8 1403.8,345.0 1399.6,341.2 1405.2,340.6 1404.1,335.0 1409.0,337.9" fill="#f2b830"/><g transform="translate(1411.3,345) rotate(-40)"><rect x="-4.500" y="-2.300" width="8" height="4.600" rx=".8" fill="#d0d0d0"/><rect x="3" y="-1.500" width="2.500" height="3" fill="#999"/></g><circle cx="1411.3" cy="329" r="2.5" fill="#b8b8c0"/><circle cx="1411.3" cy="360" r="2.5" fill="#b8b8c0"/><rect x="1545.3" y="339.5" width="46" height="10.500" rx="1" fill="#f01414" stroke="#900808" stroke-width=".6"/><path d="M1548.8 340.5V349.5" stroke="#c00c0c" stroke-width="1.500"/><path d="M1552.8 340.5V349.5" stroke="#c00c0c" stroke-width="1.500"/><path d="M1556.8 340.5V349.5" stroke="#c00c0c" stroke-width="1.500"/><path d="M1579.8 340.5V349.5" stroke="#c00c0c" stroke-width="1.500"/><path d="M1583.8 340.5V349.5" stroke="#c00c0c" stroke-width="1.500"/><path d="M1587.8 340.5V349.5" stroke="#c00c0c" stroke-width="1.500"/><polygon points="1568.3,332.7 1570.6,337.9 1575.5,335.0 1574.4,340.6 1580.0,341.2 1575.8,345.0 1580.0,348.8 1574.4,349.4 1575.5,355.0 1570.6,352.1 1568.3,357.3 1566.0,352.1 1561.1,355.0 1562.2,349.4 1556.6,348.8 1560.8,345.0 1556.6,341.2 1562.2,340.6 1561.1,335.0 1566.0,337.9" fill="#f01414"/><g transform="translate(1568.3,345) rotate(-40)"><rect x="-4.500" y="-2.300" width="8" height="4.600" rx=".8" fill="#f8f8f8"/><rect x="3" y="-1.500" width="2.500" height="3" fill="#999"/></g><circle cx="1568.3" cy="329" r="2.5" fill="#b8b8c0"/><circle cx="1568.3" cy="360" r="2.5" fill="#b8b8c0"/><circle cx="1443" cy="354.500" r="2.300" fill="#6a7a80"/><circle cx="1600" cy="354.500" r="2.500" fill="none" stroke="#c8b060" stroke-width="1"/><circle cx="1600" cy="354.500" r="1" fill="#c8b060"/><path d="M1482 388.500a14.200 14.200 0 0 1 26.600 0" fill="none" stroke="#a4a4a4" stroke-width="5.400" stroke-linecap="round"/><circle cx="1495.300" cy="396.200" r="13" fill="#c8f098" stroke="#7cc850" stroke-width="1"/><circle cx="1495.300" cy="396.200" r="9" fill="#d8f8b0" stroke="#8cd060" stroke-width="1.200"/><path d="M1495.300 383.500v4M1495.300 405v4M1482.500 396.200h4M1504.500 396.200h4" stroke="#8cd060" stroke-width="1.200"/><path d="M1490.500 397.500h4l2-2.500h4M1490.500 395h3" stroke="#999" stroke-width="1.300" fill="none"/><circle cx="1495.8" cy="412.5" r="2.5" fill="#b8b8c0"/><ellipse cx="1517.3" cy="404.3" rx="3.300" ry="2.300" fill="#18a0a8"/><path d="M1514.8 405.3l-1 2.500 3-1.500z" fill="#18a0a8"/><ellipse cx="1533" cy="859.8" rx="3.300" ry="2.300" fill="#18a0a8"/><path d="M1530.5 860.8l-1 2.500 3-1.500z" fill="#18a0a8"/><ellipse cx="1527.5" cy="908" rx="3.300" ry="2.300" fill="#18a0a8"/><path d="M1525.0 909l-1 2.500 3-1.500z" fill="#18a0a8"/><rect x="1540.500" y="858.500" width="4.500" height="4" fill="#888"/><path d="M1541.500 858.500v-1.500a1.300 1.300 0 0 1 2.600 0v1.500" fill="none" stroke="#888" stroke-width=".8"/><rect x="1484.4" y="894.1999999999999" width="34.600" height="9.200" rx="4.600" transform="rotate(29.5 1501.7 898.8)" fill="#f0b4b4" stroke="#f0b4b4" stroke-width="5"/><rect x="1484.4" y="894.1999999999999" width="34.600" height="9.200" rx="4.600" transform="rotate(-29.5 1501.7 898.8)" fill="#f0b4b4" stroke="#f0b4b4" stroke-width="5"/><rect x="1484.4" y="894.1999999999999" width="34.600" height="9.200" rx="4.600" transform="rotate(29.5 1501.7 898.8)" fill="#1c2430" stroke="#1c2430" stroke-width="2.600"/><rect x="1484.4" y="894.1999999999999" width="34.600" height="9.200" rx="4.600" transform="rotate(-29.5 1501.7 898.8)" fill="#1c2430" stroke="#1c2430" stroke-width="2.600"/><rect x="1484.4" y="894.1999999999999" width="34.600" height="9.200" rx="4.600" transform="rotate(29.5 1501.7 898.8)" fill="#a4c6e0"/><rect x="1484.4" y="894.1999999999999" width="34.600" height="9.200" rx="4.600" transform="rotate(-29.5 1501.7 898.8)" fill="#a4c6e0"/><path d="M1492.7 893.3L1510.7 904.3M1492.7 904.3L1510.7 893.3" stroke="#86aed0" stroke-width="1.200"/><circle cx="1501.7" cy="898.8" r="4.200" fill="#b4d0e6" stroke="#d0e2f0" stroke-width="1.100"/><circle cx="1501.7" cy="884.5" r="2.5" fill="#b8b8c0"/><circle cx="1501.7" cy="913.5" r="2.5" fill="#b8b8c0"/></svg>
<span class="t" style="left:1387.5px;top:273.8px;font-size:9.8px;color:#e8eef8;transform:scaleX(0.8821);">Starting Shapes | Created pressing &quot;Shift+O&quot;</span>
<span class="t" style="left:1387.5px;top:459.1px;font-size:9.8px;color:#e8e8f4;transform:scaleX(0.9040);">Polygon Tools</span>
<span class="t" style="left:1437.0px;top:293.9px;font-size:10px;color:#b4bcc8;transform:scaleX(0.8791);">tube1</span>
<span class="t" style="left:1595.0px;top:293.9px;font-size:10px;color:#b4bcc8;transform:scaleX(0.8991);">tube2</span>
<span class="t" style="left:1438.0px;top:336.9px;font-size:10px;color:#b4bcc8;transform:scaleX(0.8811);">color1</span>
<span class="t" style="left:1595.0px;top:336.9px;font-size:10px;color:#b4bcc8;transform:scaleX(0.8995);">color2</span>
<span class="t" style="left:1512.8px;top:388.8px;font-size:10px;color:#b4bcc8;transform:scaleX(0.8907);">switch1</span>
<span class="t" style="left:1512.8px;top:411.9px;font-size:8.4px;color:#4c88b4;transform:scaleX(0.9430);">Switch between cups | 0 = Tube1 | 1</span>
<span class="t" style="left:1512.8px;top:422.9px;font-size:8.4px;color:#4e8a70;transform:scaleX(0.9381);">= Tube2</span>
<span class="t" style="left:1528.3px;top:496.2px;font-size:10px;color:#c0c0cc;transform:scaleX(0.9355);">polyfill1</span>
<span class="t" style="left:1528.3px;top:539.8px;font-size:10px;color:#c0c0cc;transform:scaleX(0.9106);">softtransform1</span>
<span class="t" style="left:1528.3px;top:583.6px;font-size:10px;color:#c0c0cc;transform:scaleX(0.9029);">polyextrude1</span>
<span class="t" style="left:1528.3px;top:627.0px;font-size:10px;color:#c0c0cc;transform:scaleX(0.8533);">reverse1</span>
<span class="t" style="left:1528.3px;top:671.0px;font-size:10px;color:#c0c0cc;transform:scaleX(0.9032);">polybridge1</span>
<span class="t" style="left:1528.3px;top:714.5px;font-size:10px;color:#c0c0cc;transform:scaleX(0.8930);">polybevel1</span>
<span class="t" style="left:1528.3px;top:758.0px;font-size:10px;color:#c0c0cc;transform:scaleX(0.8930);">polybevel2</span>
<span class="t" style="left:1528.3px;top:801.5px;font-size:10px;color:#c0c0cc;transform:scaleX(0.8930);">subdivide1</span>
<span class="t" style="left:1528.3px;top:844.8px;font-size:10px;color:#d0d0d0;transform:scaleX(0.8838);">matchsize1</span>
<span class="t" style="left:1528.3px;top:817.9px;font-size:8.4px;color:#4878b0;transform:scaleX(0.9510);">Depth: 2</span>
<span class="t" style="left:1528.3px;top:867.2px;font-size:8.4px;color:#2b8e8c;transform:scaleX(0.9776);">This moves the cup up to the floor</span>
<span class="t" style="left:1521.5px;top:883.7px;font-size:7.5px;color:#4a4a4a;transform:scaleX(1.1222);">Null</span>
<span class="t" style="left:1521.0px;top:891.7px;font-size:10.6px;color:#d8d8d8;transform:scaleX(0.7601);">CUP_OUT</span>
<span class="t" style="left:1521.0px;top:915.7px;font-size:8.4px;color:#2b8e8c;transform:scaleX(0.9858);">This is the cup output to display</span>
<span class="t" style="left:1521.0px;top:926.4px;font-size:8.4px;color:#2b8e8c;transform:scaleX(1.0074);">entire network.</span>
<span class="t" style="left:1688.4px;top:288.1px;font-size:9.3px;color:#232108;transform:scaleX(0.9170);">These shapes are starting</span>
<span class="t" style="left:1688.4px;top:299.8px;font-size:9.3px;color:#232108;transform:scaleX(0.9732);">point for the final look of</span>
<span class="t" style="left:1688.4px;top:311.6px;font-size:9.3px;color:#232108;transform:scaleX(0.9254);">the cup. We have two</span>
<span class="t" style="left:1688.4px;top:323.3px;font-size:9.3px;color:#232108;transform:scaleX(0.9163);">versions.</span>
<span class="t" style="left:1688.4px;top:346.8px;font-size:9.3px;color:#232108;transform:scaleX(0.9149);">NOTE: Creating &quot;Shift+P&quot;</span>
<span class="t" style="left:1688.4px;top:358.6px;font-size:9.3px;color:#232108;transform:scaleX(0.9418);">allows us to create this</span>
<span class="t" style="left:1688.4px;top:370.3px;font-size:9.3px;color:#232108;transform:scaleX(0.9454);">note card.</span>
<svg width="0" height="0" style="left:0;top:0"><defs>
<radialGradient id="sph" cx="0.38" cy="0.32" r="0.75"><stop offset="0" stop-color="#e8ecef"/><stop offset="0.5" stop-color="#a8b0b6"/><stop offset="1" stop-color="#5c666e"/></radialGradient>
<radialGradient id="gil" cx="0.4" cy="0.35" r="0.75"><stop offset="0" stop-color="#f4f0e8"/><stop offset="0.6" stop-color="#d8d0c8"/><stop offset="1" stop-color="#a8a098"/></radialGradient>
<radialGradient id="mb" cx="0.4" cy="0.35" r="0.75"><stop offset="0" stop-color="#d8ecfc"/><stop offset="0.6" stop-color="#78a8dc"/><stop offset="1" stop-color="#3868a8"/></radialGradient>
<linearGradient id="tub" x1="0" x2="1"><stop offset="0" stop-color="#7c868c"/><stop offset="0.4" stop-color="#d4dade"/><stop offset="1" stop-color="#8a9499"/></linearGradient>
<linearGradient id="fnt" x1="0" x2="0" y1="0" y2="1"><stop offset="0" stop-color="#f0f0f0"/><stop offset="1" stop-color="#8c9296"/></linearGradient>
</defs></svg>
<svg style="left:-7px;top:67.5px;" width="24" height="24" viewBox="0 0 24 24"><path d="M2 6l10-4 10 4v11l-10 5-10-5z" fill="#b8bec2"/><path d="M2 6l10 4v12l-10-5z" fill="#8c9498"/><path d="M12 10l10-4v11l-10 5z" fill="#d0d4d8"/><path d="M2 6l10-4 10 4-10 4z" fill="#eceef0"/></svg>
<svg style="left:38.8px;top:67.5px;" width="24" height="24" viewBox="0 0 24 24"><circle cx="12" cy="12" r="9.800" fill="url(#sph)"/></svg>
<svg style="left:82px;top:67.5px;" width="24" height="24" viewBox="0 0 24 24"><path d="M6 4.500v14c0 3 12 3 12 0v-14z" fill="url(#tub)"/><ellipse cx="12" cy="4.500" rx="6" ry="2.300" fill="#e4e8ea"/><ellipse cx="12" cy="4.700" rx="4.300" ry="1.400" fill="#a8b0b4"/></svg>
<svg style="left:125px;top:67.5px;" width="24" height="24" viewBox="0 0 24 24"><ellipse cx="12" cy="12.500" rx="9.800" ry="6.300" fill="#8e9ca6"/><ellipse cx="12" cy="11.300" rx="9.300" ry="5" fill="#b4c0c8"/><ellipse cx="12" cy="11.300" rx="4.800" ry="1.700" fill="#343a3e"/></svg>
<svg style="left:168px;top:67.5px;" width="24" height="24" viewBox="0 0 24 24"><path d="M6.500 12h11l4.500 6H2z" fill="#d4d4d4"/><path d="M2 18h20v1H2z" fill="#888"/></svg>
<svg style="left:211px;top:67.5px;" width="24" height="24" viewBox="0 0 24 24"><path d="M3 17l18-9" stroke="#5aa0e0" stroke-width="2"/><path d="M4 7l17 10" stroke="#e03030" stroke-width="2.200"/><path d="M12 1.500v21" stroke="#c8d840" stroke-width="2.200"/><circle cx="12" cy="12" r="1.500" fill="#fff"/><path d="M19 14.500l3.500 3-4.500.3z" fill="#e03030"/></svg>
<svg style="left:254px;top:67.5px;" width="24" height="24" viewBox="0 0 24 24"><path d="M4 20L18 3" stroke="#111" stroke-width="1.800"/><path d="M5 21L19 4" stroke="#d83030" stroke-width="1.300"/><path d="M4 20l6 1M4 20h14M18 3l1 16" stroke="#6a3a3a" stroke-width=".6" opacity=".7"/></svg>
<svg style="left:297.5px;top:67.5px;" width="24" height="24" viewBox="0 0 24 24"><circle cx="12" cy="12.500" r="9.500" fill="none" stroke="#2c2c2c" stroke-width="1.600"/><circle cx="12" cy="12.500" r="8.500" fill="#424242" opacity=".6"/></svg>
<svg style="left:350px;top:67.5px;" width="24" height="24" viewBox="0 0 24 24"><path d="M3 15c3-12 15-13 19-3" fill="none" stroke="#6a8ac8" stroke-width="1.200"/><path d="M4 4l10 9 3 6-6-2.500z" fill="#d8d8d8"/><path d="M11 13l3-1 4 7.500-3.500 1z" fill="#3a78d8"/><circle cx="3.500" cy="15.500" r="1.500" fill="#ddd"/><circle cx="21" cy="5" r="1.300" fill="#e03030"/><path d="M4 4l2 4" stroke="#888"/></svg>
<svg style="left:410px;top:67.5px;" width="24" height="24" viewBox="0 0 24 24"><path d="M5 8c2 3-4 6-1 9s6 2 8 3" fill="none" stroke="#111" stroke-width="2"/><path d="M11 19L21 2.500" stroke="#4a88e0" stroke-width="2.800" stroke-linecap="round"/><path d="M11.500 18L20 4" stroke="#a8c8f4" stroke-width=".9"/></svg>
<svg style="left:461px;top:67.5px;" width="24" height="24" viewBox="0 0 24 24"><path d="M5 3l8 4.500-9 8 7 5" fill="none" stroke="#7a6a3a" stroke-width="1"/><circle cx="5" cy="3" r="1.800" fill="#e8c020"/><circle cx="13" cy="7.500" r="1.800" fill="#e8c020"/><circle cx="4.500" cy="15.500" r="1.800" fill="#e8c020"/><path d="M12 20.500L21 4" stroke="#4a88e0" stroke-width="2.800" stroke-linecap="round"/></svg>
<svg style="left:511px;top:67.5px;" width="24" height="24" viewBox="0 0 24 24"><g transform="rotate(25 12 12)"><rect x="7.500" y="6" width="8" height="15" rx="2" fill="#d8d8d8"/><rect x="7.500" y="6" width="3" height="15" rx="1.500" fill="#f4f4f4"/><rect x="9.500" y="3" width="4" height="3.500" fill="#b0b0b0"/><path d="M11 11a3 3 0 1 0 3 4" fill="none" stroke="#d83030" stroke-width="1.700"/></g><circle cx="19" cy="5" r="2.500" fill="#e03030" opacity=".9"/></svg>
<svg style="left:562px;top:67.5px;" width="24" height="24" viewBox="0 0 24 24"><path d="M4 3h16v5h-1.500c-.5-2-1.500-2.500-4-2.500v12c0 1.500.8 2 2.500 2V21H7v-1.500c1.700 0 2.500-.5 2.500-2v-12c-2.500 0-3.500.5-4 2.500H4z" fill="url(#fnt)"/></svg>
<svg style="left:618px;top:65px;" width="24" height="24" viewBox="0 0 24 24"><path d="M12 1l7 4 2.500 8-5 7h-9l-5-7L5 5z" fill="#9aa0a4"/><path d="M12 1l2 10-9-6zM12 1l7 4-5 6zM14 11l7.500 2-5 7zM14 11l-6.500 9H16.500zM5 5l9 6-6.500 9-5-7z" fill="#c0c4c8" stroke="#70787c" stroke-width=".5"/><path d="M12 1l2 10 5-6z" fill="#e0e4e6"/></svg>
<svg style="left:678px;top:67.5px;" width="24" height="24" viewBox="0 0 24 24"><path d="M12 22v-9M12 13L6 7M12 13l6-6M12 15l-8-3M12 15l8-3M6 7L4 3M6 7L8 2.500M18 7l2-4M18 7l-2-4.500M12 13V4M12 7L10 4M12 7l2-3M4 12L2 9M20 12l2-3M9 10L6 11M15 10l3 1" stroke="#3a78d0" stroke-width="1.200" fill="none"/></svg>
<svg style="left:725px;top:67.5px;" width="24" height="24" viewBox="0 0 24 24"><circle cx="7.500" cy="7.500" r="5.300" fill="url(#mb)"/><circle cx="15.500" cy="14" r="6" fill="url(#mb)"/><path d="M10.500 9l3 1.500" stroke="#78a8dc" stroke-width="3"/></svg>
<svg style="left:769px;top:67.5px;" width="24" height="24" viewBox="0 0 24 24"><path d="M2 6l3-2h6l2 2h7v4H2z" fill="#e89040"/><path d="M3 9h17l-1 11H2z" fill="#f4e8d8"/><path d="M2 20l3-9h17l-3 9z" fill="#f0a050"/><path d="M12 7l10-1-5 9z" fill="#f06820"/><path d="M3 10l10 1-2 8H3z" fill="#fcfcfc" opacity=".85"/></svg>
<svg style="left:813px;top:67.5px;" width="24" height="24" viewBox="0 0 24 24"><path d="M12 12.500a1.500 1.500 0 1 1 1.500 1.500 3.500 3.500 0 1 1 3.500-3.500 6 6 0 1 1-6-6 8.500 8.500 0 1 1-8.500 8.500" fill="none" stroke="#e09048" stroke-width="1.900" transform="rotate(170 12 12)"/></svg>
<svg style="left:857px;top:67.5px;" width="24" height="24" viewBox="0 0 24 24"><path d="M12 2v3" stroke="#c07838" stroke-width="1.200"/><ellipse cx="12" cy="6.500" rx="2.500" ry="1" fill="none" stroke="#e09858" stroke-width="1.200"/><ellipse cx="12" cy="9.500" rx="4.300" ry="1.500" fill="none" stroke="#e09858" stroke-width="1.300"/><ellipse cx="12" cy="13" rx="6.300" ry="2.200" fill="none" stroke="#e09858" stroke-width="1.400"/><ellipse cx="12" cy="17.500" rx="8.800" ry="3" fill="none" stroke="#e09858" stroke-width="1.500"/><path d="M18 19.500c2 1 1 3-2 3.500" fill="none" stroke="#e09858" stroke-width="1.400"/></svg>
<svg style="left:911px;top:67.5px;" width="24" height="24" viewBox="0 0 24 24"><path d="M5 9l7-4 7 4v7l-7 4-7-4z" fill="#b8bcc0"/><path d="M5 9l7 3.500 7-3.500-7-4z" fill="#e4e6e8"/><path d="M8 7l3-2 3 2-3 1.500zM12 4l3-2 3 2-3 1.500z" fill="#f4f4f4" stroke="#999" stroke-width=".4"/><path d="M2 14l6-3v3c3 0 8 1 11-1v-2.500l4 5-4 5v-2.500c-4 1-8 1-11-1v2.500z" fill="#40b030"/></svg>
<svg style="left:1029px;top:68.5px;" width="24" height="24" viewBox="0 0 24 24"><g transform="translate(12 12) scale(.82) translate(-12 -12)"><circle cx="10" cy="6.500" r="3" fill="#2c3a40" stroke="#7e969e" stroke-width="1.500"/><circle cx="5" cy="13" r="3.200" fill="#2c3a40" stroke="#7e969e" stroke-width="1.500"/><rect x="7.500" y="9" width="10" height="8" rx="1.500" fill="#3e5058"/><circle cx="11.500" cy="14" r="2.300" fill="none" stroke="#7e969e" stroke-width="1.300"/><path d="M17.500 11.500l5-2.500v7l-5-2.500z" fill="#5c7680"/></g></svg>
<svg style="left:1078.5px;top:67.5px;" width="24" height="24" viewBox="0 0 24 24"><circle cx="12" cy="12" r="2.800" fill="#fce8a0"/><path d="M8.500 8.500L3 3M15.500 8.500L21 3M8.500 15.500L3 21M15.500 15.500L21 21" stroke="#f0b028" stroke-width="1.700"/><path d="M2 2h4.500L2 6.500zM22 2h-4.500L22 6.500zM2 22h4.500L2 17.500zM22 22h-4.500L22 17.500z" fill="#f0b028"/></svg>
<svg style="left:1133px;top:67.5px;" width="24" height="24" viewBox="0 0 24 24"><g transform="rotate(-30 12 12)"><path d="M5 5.500v11.500c0 4 14 4 14 0V5.500z" fill="#3c3c3c" stroke="#e8c468" stroke-width="1.700"/><ellipse cx="12" cy="5.500" rx="7" ry="3.300" fill="#f8e4b0" stroke="#e8c468" stroke-width="1.500"/><ellipse cx="12" cy="17" rx="7" ry="3.300" fill="#4a4a4a" stroke="#e8c468" stroke-width="1.500"/></g></svg>
<svg style="left:1185px;top:67.5px;" width="24" height="24" viewBox="0 0 24 24"><path d="M2 9l12-7 6 6-12 8z" fill="#f0b028"/><path d="M5 9l9-5" stroke="#fce8a0" stroke-width="2" stroke-dasharray="2 1.500"/><path d="M8 14l1 8M13 11l7 4M11 13l8 9" stroke="#f0b028" stroke-width="1.700"/><path d="M6.500 20h5l-2 3zM18 12l4 3.500-4 1zM16 20l4.500 3 .5-4.500z" fill="#f0b028"/></svg>
<svg style="left:1245px;top:65.5px;" width="24" height="24" viewBox="0 0 24 24"><path d="M12 1c4 4 6 8 4 12-1 3-3 4-4 4s-3-1-4-4c-2-4 0-8 4-12z" fill="#a878a8"/><path d="M12 3c2 3 3 6 2 9s-2 3-2 3-1 0-2-3 0-6 2-9z" fill="#e04848"/><path d="M12 6l1.500 4-1.500 3-1.500-3z" fill="#f8d040"/><rect x="10.500" y="15" width="3" height="6" fill="#888"/><path d="M7 10c-1 3 0 6 2 7" stroke="#c8c8c8" fill="none"/></svg>
<svg style="left:1313.5px;top:67.5px;" width="24" height="24" viewBox="0 0 24 24"><circle cx="12" cy="10.500" r="7.500" fill="#c8a8a0" opacity=".45"/><path d="M12 2.500c3 3 5.500 6 4.500 9.500-.5 2.500-2.500 4-4.500 4s-4-1.500-4.500-4c-1-3.500 1.500-6.500 4.500-9.500z" fill="#e84020"/><path d="M12 7c2 2 3 4 2.500 6s-1.500 3-2.500 3-2-1-2.500-3 .500-4 2.500-6z" fill="#f8b830"/><ellipse cx="12" cy="18.500" rx="7" ry="2" fill="#e0c088"/><ellipse cx="12" cy="19.500" rx="7.500" ry="1.500" fill="#a06030" opacity=".7"/></svg>
<svg style="left:1377px;top:67.5px;" width="24" height="24" viewBox="0 0 24 24"><path d="M3 2l14 15M12 2l8 8M3 11l8 9" stroke="#f0b028" stroke-width="1.800"/><path d="M19 12v7h-7zM21.500 5.500v6h-6zM12.500 16v6h-6z" fill="#f0b028"/></svg>
<svg style="left:1444px;top:65px;" width="24" height="24" viewBox="0 0 24 24"><path d="M3 14.500a9 9.500 0 0 1 18 0" fill="#3a3a3a" stroke="#e8c468" stroke-width="1.700"/><ellipse cx="12" cy="15" rx="9.500" ry="3.300" fill="#f8e0a0" stroke="#e8b848" stroke-width="1.500"/></svg>
<svg style="left:1503px;top:67.5px;" width="24" height="24" viewBox="0 0 24 24"><ellipse cx="12" cy="16" rx="9.500" ry="4.500" fill="#c8a018"/><ellipse cx="12" cy="14.500" rx="9.500" ry="4.500" fill="#f0d040"/><path d="M12 14.500L16 5" stroke="#704818" stroke-width="2"/><circle cx="6" cy="5" r="2.500" fill="#f8d848"/><path d="M8 3c3-2 8-1 10 2" fill="none" stroke="#4888d8" stroke-width="1.500"/></svg>
<svg style="left:1548px;top:67.5px;" width="24" height="24" viewBox="0 0 24 24"><circle cx="12" cy="11.500" r="9.700" fill="url(#gil)"/><circle cx="9" cy="9" r="5" fill="#c8e8c0" opacity=".25"/><circle cx="16" cy="9" r="4" fill="#f0c0c0" opacity=".25"/></svg>
<svg style="left:1602px;top:67px;" width="24" height="24" viewBox="0 0 24 24"><path d="M6 2c3-1 5 0 5 2l.5 7c3 1 8 3 9 5 1 2-1 4-3 3.500L8 16c-2-1-3-2-3-4z" fill="#a8c4e8"/><path d="M6 2c2-.5 3 0 3 2l.5 8 10 4" fill="none" stroke="#e4eefa" stroke-width="1.600"/><path d="M8 16l9.500 3.500" stroke="#6888c0" stroke-width="1.500"/></svg>
<svg style="left:1664px;top:67.5px;" width="24" height="24" viewBox="0 0 24 24"><path d="M4 3l3.500.5 1.500 3 11 11-2 3.500-12-5z" fill="#98a820"/><path d="M4 3l4 4 12 10.500" stroke="#c8d840" stroke-width="1.500" fill="none"/><path d="M6 16l3-9" stroke="#68780c" stroke-width="1"/></svg>
<svg style="left:1728px;top:67.5px;" width="24" height="24" viewBox="0 0 24 24"><path d="M12 2a6.500 6.500 0 0 1 6.500 6.500c0 3-2.500 4.500-3 7.500h-7c-.5-3-3-4.500-3-7.500A6.500 6.500 0 0 1 12 2z" fill="#c8e4e0"/><path d="M12 2a6.500 6.500 0 0 0-6.500 6.500c0 2 1 3 2 4.500 1-5 3-9 4.500-11z" fill="#eafaf8"/><rect x="9" y="16" width="6" height="5.500" rx="1.200" fill="#8a8a8a"/><path d="M9 18h6" stroke="#555"/></svg>
<svg style="left:1797.5px;top:64.5px;" width="24" height="24" viewBox="0 0 24 24"><rect x="2" y="7" width="20" height="11.500" rx="1.500" fill="#c4c8cc"/><rect x="2" y="7" width="4" height="11.500" fill="#3a78c8"/><path d="M5 7l2-3h10l2 3z" fill="#8a9098"/><circle cx="9" cy="13.500" r="3" fill="#222" stroke="#e4e4e4" stroke-width="1.300"/><circle cx="17" cy="13.500" r="3" fill="#222" stroke="#e4e4e4" stroke-width="1.300"/></svg>
<svg style="left:1859.5px;top:67.5px;" width="24" height="24" viewBox="0 0 24 24"><path d="M2 11l9-4.500 11 3.500v6l-10 4.500-10-4z" fill="#78848c"/><path d="M2 11l10 4 10-5-11-3.500z" fill="#b0b8c0"/><path d="M12 15v5.500" stroke="#4a5258"/><path d="M4 13.500l7 2.800v2l-7-2.800z" fill="#3a78c8"/><path d="M10 7l2-4.500h2l1 4" fill="none" stroke="#98a0a8" stroke-width="1.700"/></svg>
<svg style="left:1906px;top:67.5px;" width="24" height="24" viewBox="0 0 24 24"><path d="M2 10l8-5 10 4-8 5z" fill="#d8d8d8"/><path d="M2 14l8-4 10 4-8 5z" fill="#b0b0b0"/></svg>
<svg style="left:0px;top:172px;" width="20" height="22" viewBox="0 0 20 22"><rect x="-0.7" y="1" width="2.700" height="2.700" fill="#d0d0d0"/><rect x="-0.7" y="7" width="2.700" height="2.700" fill="#d0d0d0"/><rect x="-0.7" y="13" width="2.700" height="2.700" fill="#d0d0d0"/><rect x="5.3" y="1" width="2.700" height="2.700" fill="#d0d0d0"/><rect x="5.3" y="7" width="2.700" height="2.700" fill="#d0d0d0"/><rect x="5.3" y="13" width="2.700" height="2.700" fill="#d0d0d0"/><rect x="11.3" y="1" width="2.700" height="2.700" fill="#d0d0d0"/><rect x="11.3" y="7" width="2.700" height="2.700" fill="#d0d0d0"/><rect x="11.3" y="13" width="2.700" height="2.700" fill="#d0d0d0"/><path d="M11 14.500h7.500l-3.700 5.500z" fill="#8a8a8a"/></svg>
<svg style="left:234.5px;top:170.5px;" width="21" height="21" viewBox="0 0 24 24"><rect x="9" y="5" width="10" height="11" fill="#8a8a8a"/><path d="M6 5l6 4M6 12l7-3M8 18l4-9M6 5v7M12 9l6-2" stroke="#c8a830" stroke-width="1"/><circle cx="6" cy="5" r="2.200" fill="#f0d060"/><circle cx="12" cy="9" r="2.200" fill="#f0d060"/><circle cx="6" cy="12" r="2.200" fill="#f0d060"/><circle cx="9" cy="18" r="2.200" fill="#f0d060"/><circle cx="17" cy="7" r="2.200" fill="#f0d060"/><circle cx="14" cy="15" r="2.200" fill="#f0d060"/></svg>
<svg style="left:260.5px;top:170.5px;" width="21" height="21" viewBox="0 0 24 24"><path d="M3 6l9-3.500 9 3.500v11l-9 4-9-4z" fill="#a8aaac"/><path d="M3 6l9 3.500v11.500l-9-4z" fill="#d8d8d4"/><path d="M12 9.500L21 6v11l-9 4z" fill="#8c9094"/><path d="M3 6l9-3.500 9 3.500-9 3.500z" fill="#c4c6c8"/><path d="M8.500 9v10.500" stroke="#e8b820" stroke-width="2.200"/></svg>
<div style="left:285.5px;top:169.5px;width:21.5px;height:24.5px;background:linear-gradient(#6482a8,#5a789e);"></div>
<svg style="left:285.5px;top:170.5px;" width="21" height="21" viewBox="0 0 24 24"><path d="M12 2l5.500 5-5.500 5-5.500-5z" fill="#8a8c90"/><path d="M6 7.500l5.500 5-5.500 5-5.500-5zM18 7.500l5.500 5-5.500 5-5.500-5z" fill="#7a7c82"/><path d="M12 12.500l5.500 5-5.500 5-5.500-5z" fill="#f0d050"/></svg>
<div style="left:309px;top:168px;width:1px;height:27px;background:#454545;"></div>
<svg style="left:308.5px;top:168.5px;" width="21" height="21" viewBox="0 0 24 24"><circle cx="12" cy="12" r="3.600" fill="#d090d0"/><circle cx="12" cy="12" r="2" fill="#e8b8e8"/></svg>
<svg style="left:336.0px;top:170.5px;" width="21" height="21" viewBox="0 0 24 24"><circle cx="12" cy="12" r="7.500" fill="none" stroke="#d0d0d0" stroke-width="1.400"/><circle cx="12" cy="4.500" r="1.300" fill="#fff"/><circle cx="19.500" cy="12" r="1.300" fill="#fff"/><circle cx="12" cy="19.500" r="1.300" fill="#fff"/><rect x="2.500" y="9.500" width="4.500" height="4.500" fill="#f0c020"/></svg>
<div style="left:364.5px;top:168px;width:1px;height:27px;background:#454545;"></div>
<div style="left:370px;top:169.5px;width:23px;height:24.5px;background:linear-gradient(#6482a8,#5a789e);"></div>
<svg style="left:371.0px;top:170.5px;" width="21" height="21" viewBox="0 0 24 24"><rect x="4" y="4" width="16" height="16" fill="#f0f0dc"/><rect x="4" y="4" width="16" height="16" fill="none" stroke="#1c1c1c" stroke-width="1.500" stroke-dasharray="2 1.500"/></svg>
<div style="left:394.5px;top:168px;width:1px;height:27px;background:#454545;"></div>
<svg style="left:396.5px;top:170.5px;" width="21" height="21" viewBox="0 0 24 24"><ellipse cx="13" cy="9.500" rx="8" ry="5" fill="none" stroke="#b0b0b0" stroke-width="1.700" transform="rotate(-15 13 9.500)"/><path d="M6 12c-2 2-1 4 1 4s1 3 0 5" fill="none" stroke="#b0b0b0" stroke-width="1.500"/></svg>
<svg style="left:421.5px;top:170.5px;" width="21" height="21" viewBox="0 0 24 24"><path d="M4 12c0-4 3-6 6-7l4-1 2 3-5 3-3 5z" fill="#e8e4c0"/><path d="M14 6c3 2 5 8 4.500 14" fill="none" stroke="#c0c0c0" stroke-width="1.700"/><path d="M16 9c1.500 3 2 7 1.500 11" fill="none" stroke="#888" stroke-width="1"/></svg>
<svg style="left:447.5px;top:171.5px;" width="21" height="21" viewBox="0 0 24 24"><path d="M6 4l3 4" stroke="#e02020" stroke-width="2.200"/><path d="M9 8l8 11" stroke="#c0c0c0" stroke-width="1.800"/></svg>
<div style="left:475px;top:168px;width:1px;height:27px;background:#454545;"></div>
<svg style="left:480.5px;top:170.5px;" width="21" height="21" viewBox="0 0 24 24"><path d="M2 9c3-5 10-5 13 0-3 4-10 4-13 0z" fill="#e8e8e8"/><circle cx="8" cy="8.500" r="2.800" fill="#111"/><path d="M12 10l7 6-3 .3 1.800 3.700-1.600.8-1.800-3.800L12 19z" fill="#f4f4f4" stroke="#333" stroke-width=".7"/></svg>
<svg style="left:507.5px;top:170.5px;" width="21" height="21" viewBox="0 0 24 24"><rect x="5" y="6" width="15" height="15" fill="#b03838" opacity=".75"/><path d="M13 7l6 6.500-6 6.500-6-6.500z" fill="#f0d040"/><circle cx="6.500" cy="6.500" r="2.800" fill="#e8a0a0"/><path d="M6.500 4.500v4M4.500 6.500h4" stroke="#b02020" stroke-width="1"/></svg>
<svg style="left:532.5px;top:170.5px;" width="21" height="21" viewBox="0 0 24 24"><circle cx="12" cy="12" r="9.500" fill="#2a2a2a" stroke="#5c5644" stroke-width="1.400"/><path d="M12 4l8 8-8 8-8-8z" fill="#f0d040"/><path d="M8 8l8 8M16 8l-8 8" stroke="#a08818" stroke-width=".8"/></svg>
<svg style="left:556.5px;top:170.5px;" width="21" height="21" viewBox="0 0 24 24"><path d="M7 2v10M2.500 4.500l9 5M11.500 4.500l-9 5" stroke="#e8e8e8" stroke-width="1.500"/><path d="M12 9l7 6.500-3 .3 1.800 3.700-1.600.8-1.800-3.800L12 19z" fill="#f4f4f4" stroke="#333" stroke-width=".7"/></svg>
<svg style="left:582.5px;top:171.5px;" width="21" height="21" viewBox="0 0 24 24"><path d="M3 12l1-8 3 5 2-7 3 7 3-7 2 7 3-5 1 8z" fill="#e8c828"/><rect x="3" y="12" width="18" height="6" fill="#a8a048"/><rect x="3" y="16" width="18" height="3" fill="#5a7a6a"/><path d="M18 17l5 2.500-5 3z" fill="#8a8a8a"/></svg>
<svg style="left:38px;top:212px;filter:drop-shadow(1px 1.500px 1px rgba(30,40,50,.55));" width="22" height="32" viewBox="0 0 22 32"><path d="M3.500 3.500v20l4.600-4.300 3.500 8 3.200-1.400-3.500-7.800 6.200-.300z" fill="#0a0a0a" stroke="#8a9aa4" stroke-width=".9" stroke-linejoin="round"/></svg>
<span class="t" style="left:72.0px;top:217.2px;font-size:14.6px;color:#fff;font-weight:bold;-webkit-text-stroke:0;transform:scaleX(0.9763);text-shadow:1px 1px 1.500px rgba(20,30,40,.8);">Select</span>
<div style="left:1040px;top:203.5px;width:54.5px;height:21px;background:#5f727d;border:1px solid #93a6b0;box-sizing:border-box;border-radius:10.500px;"></div>
<span class="t" style="left:1048.0px;top:206.3px;font-size:11.6px;color:#d0dade;transform:scaleX(0.9735);">Persp</span>
<svg style="left:1080.2px;top:212.3px;" width="7" height="4.5" viewBox="0 0 7 4.5"><path d="M0 0.300h7L3.500 4.300z" fill="#e4ecf0"/></svg>
<div style="left:1101.5px;top:203.5px;width:64.5px;height:21px;background:#5f727d;border:1px solid #93a6b0;box-sizing:border-box;border-radius:10.500px;"></div>
<span class="t" style="left:1110.0px;top:206.3px;font-size:11.6px;color:#d0dade;transform:scaleX(0.9758);">No cam</span>
<svg style="left:1151.7px;top:212.3px;" width="7" height="4.5" viewBox="0 0 7 4.5"><path d="M0 0.300h7L3.500 4.300z" fill="#e4ecf0"/></svg>
<span class="t" style="left:435.4px;top:918.0px;font-size:10.8px;color:#3e3ee0;font-weight:bold;-webkit-text-stroke:0;transform:scaleX(1.0713);">Select the geometry, then choose an operation to perform.</span>
<span class="t" style="left:470.2px;top:941.5px;font-size:11.2px;color:#2c2c2c;transform:scaleX(1.0273);">Hold A to select full (MMB) or partial (LMB) loops.</span>
<span class="t" style="left:470.2px;top:957.2px;font-size:11.2px;color:#2c2c2c;transform:scaleX(1.0478);">Hold H to select by flood fill.</span>
<svg style="left:22px;top:946px;" width="36" height="32" viewBox="0 0 36 32"><path d="M12.300 18L15.600 5.500" stroke="#58d858" stroke-width="1.600"/><path d="M12.300 18L22 25.500" stroke="#e03030" stroke-width="1.400"/><path d="M12.300 18L8 21.500" stroke="#2020d0" stroke-width="1.400"/><path d="M3.500 20.500h5l-5 5h5" fill="none" stroke="#1818d8" stroke-width="1.500"/><path d="M23 19l5 6M28 19l-5 6" stroke="#e02828" stroke-width="1.300"/><path d="M13.500 6.500l2 3.500M17.500 6.500L14 13" stroke="#58d858" stroke-width="1.500"/></svg>
<span class="t" style="left:1031.7px;top:956.1px;font-size:12px;color:#ecec38;transform:scaleX(0.9735);opacity:.85;">Non-Commercial Edition</span>
<div style="left:0px;top:198px;width:18px;height:10px;background:linear-gradient(#5a5a5a,#484848);"></div>
<div style="left:0px;top:208px;width:18px;height:1px;background:#222;"></div>
<div style="left:0px;top:215px;width:14px;height:24px;background:#2c2c2c;"></div>
<div style="left:0px;top:240px;width:14px;height:24px;background:#5a7498;"></div>
<div style="left:0px;top:265px;width:14px;height:24px;background:#2c2c2c;"></div>
<svg style="left:0px;top:215px;" width="14" height="24" viewBox="0 0 14 24"><circle cx="4" cy="9" r="6" fill="#999"/><path d="M0 10l6 2-3 9-3-1z" fill="#f0d838"/><path d="M9 14l4 4-4 4z" fill="#888"/></svg>
<svg style="left:0px;top:240px;" width="14" height="24" viewBox="0 0 14 24"><path d="M0 4l6-2 5 6-7 5-4-3z" fill="#8a8a8a"/><path d="M0 12l7-3 2 6-7 4-2-2z" fill="#f0d838"/><path d="M9 14l4.500 4h-4.500z" fill="#1c2c44" transform="translate(0,2)"/></svg>
<svg style="left:0px;top:265px;" width="14" height="24" viewBox="0 0 14 24"><path d="M0 4l8 2 2 8-8 4-2-2z" fill="#f0d838"/><path d="M0 4l8 2-2 5-6-2z" fill="#f8e868"/><path d="M9 14l4 4-4 4z" fill="#888"/></svg>
<div style="left:0px;top:298px;width:18px;height:1px;background:#2a2a2a;"></div>
<div style="left:0px;top:304.5px;width:15px;height:28px;background:#6280a6;"></div>
<div style="left:0px;top:335px;width:14px;height:26px;background:#6280a6;"></div>
<svg style="left:0px;top:304.5px;" width="15" height="28" viewBox="0 0 15 28"><path d="M0 7l0 14 3.500-3 2.500 6 2.500-1-2.500-6 4.500-.500z" fill="#f0f0f0" stroke="#555" stroke-width=".7"/><path d="M10.500 22l4.500 3.500h-4.500z" fill="#2a3a2a"/></svg>
<svg style="left:0px;top:335px;" width="14" height="26" viewBox="0 0 14 26"><rect x="-3" y="11" width="7" height="8" rx="1" fill="#f0f0f0"/><path d="M-2 11v-3a3 3 0 0 1 5 0v3" fill="none" stroke="#f0f0f0" stroke-width="1.700"/></svg>
<svg style="left:0px;top:366px;" width="18" height="20" viewBox="0 0 18 20"><circle cx="3" cy="7" r="3.800" fill="#b0b0b0"/><path d="M4 13c3 2 6 0 6-3" fill="none" stroke="#e02020" stroke-width="2"/><path d="M1 15l5-1-1 3z" fill="#e02020"/></svg>
<svg style="left:0px;top:395px;" width="18" height="20" viewBox="0 0 18 20"><circle cx="3" cy="7" r="4" fill="#b8b8b8"/><path d="M2 15c4 2 9-1 8-5" fill="none" stroke="#e86020" stroke-width="2.400"/><path d="M0 12l4 1-3 3z" fill="#e02020"/></svg>
<svg style="left:0px;top:423px;" width="18" height="20" viewBox="0 0 18 20"><path d="M0 3h4v3H0z" fill="#e02020"/><circle cx="3" cy="10" r="4" fill="#909090"/><path d="M2 16l5-2v4z" fill="#e02020"/></svg>
<svg style="left:0px;top:452px;" width="18" height="20" viewBox="0 0 18 20"><path d="M3 2v16M0 6l7 8M7 6l-7 8" stroke="#e0e0e0" stroke-width="1.500"/><path d="M1 8l4 4" stroke="#e02020" stroke-width="2"/></svg>
<svg style="left:0px;top:486px;" width="18" height="20" viewBox="0 0 18 20"><circle cx="2" cy="9" r="4.500" fill="#f0c020"/><path d="M4 6l5 6-6 1z" fill="#e02020"/><path d="M5 8l3 4" stroke="#f8a0a0"/><path d="M12 11l4 4-4 4z" fill="#888"/></svg>
<svg style="left:0px;top:522px;" width="18" height="20" viewBox="0 0 18 20"><path d="M1 4a6 6 0 0 1 6 10" fill="none" stroke="#e02020" stroke-width="3"/><path d="M12 12l4 4-4 4z" fill="#888"/></svg>
<svg style="left:0px;top:555px;" width="18" height="20" viewBox="0 0 18 20"><path d="M0 4a6 6 0 0 1 5 11" fill="none" stroke="#c8c8c8" stroke-width="2.600"/><path d="M0 14l4 1-2 4z" fill="#e02020"/><path d="M8 17h7l-3.500 4z" fill="#888"/></svg>
<svg style="left:0px;top:593px;" width="18" height="20" viewBox="0 0 18 20"><circle cx="3" cy="6" r="3" fill="none" stroke="#c0c0c0" stroke-width="1.500"/><rect x="0" y="8" width="7" height="6" fill="#888"/><path d="M12 10l4 4-4 4z" fill="#888"/></svg>
<svg style="left:0px;top:622px;" width="18" height="20" viewBox="0 0 18 20"><path d="M-2 9a6 6 0 0 1 10 0" fill="none" stroke="#d0d0d0" stroke-width="1.500"/><ellipse cx="3" cy="12" rx="5.500" ry="4" fill="#e8e8e8"/><path d="M0 18h10v-8" fill="none" stroke="#e04040" stroke-width="1.300"/></svg>
<svg style="left:0px;top:652px;" width="18" height="20" viewBox="0 0 18 20"><ellipse cx="3" cy="8" rx="6" ry="3" fill="none" stroke="#c8c8c8" stroke-width="1.400"/><path d="M-3 8v5c0 4 12 4 12 0V8" fill="#e8e8e8" opacity=".9"/><path d="M12 12l4 4-4 4z" fill="#888"/></svg>
<svg style="left:0px;top:926px;" width="18" height="20" viewBox="0 0 18 20"><path d="M0 6l5 2-1 4-4-1z" fill="#e8e8e8"/><path d="M0 12l5 1" stroke="#e04040" stroke-width="2"/><path d="M5 14l4 3.500-4 3z" fill="#888"/></svg>
<svg style="left:0px;top:952px;" width="18" height="20" viewBox="0 0 18 20"><circle cx="2" cy="8" r="5" fill="#c8c8c8"/><path d="M-2 6l8 4M-2 10l8-4" stroke="#888"/><path d="M8 15l4 3.500-4 3z" fill="#888"/></svg>
<svg style="left:1175.5px;top:215px;" width="20" height="20" viewBox="0 0 20 20"><path d="M2 9l8-4 8 4-8 4z" fill="none" stroke="#d8d8d8" stroke-width="1.300"/><path d="M6 9l4-2 4 2-4 2z" fill="none" stroke="#d8d8d8" stroke-width="1"/><path d="M15.500 13.500l4.500 3.500-4.500 3z" fill="#8a8a8a"/></svg>
<svg style="left:1175.5px;top:238px;" width="20" height="20" viewBox="0 0 20 20"><path d="M2 5l12-2 4 11-13 3z" fill="#2a3a2a" stroke="#78b860" stroke-width="1.400"/><path d="M5 7c4-1 7 0 8 3s-3 4-5 2" fill="none" stroke="#78b860" stroke-width="1.300"/><path d="M15.500 13.500l4.500 3.500-4.500 3z" fill="#8a8a8a"/></svg>
<svg style="left:1175.5px;top:265px;" width="20" height="20" viewBox="0 0 20 20"><rect x="4" y="9" width="12" height="9" rx="1" fill="#d8d8d8"/><path d="M6 9V6.500a4 4 0 0 1 8 0V9" fill="none" stroke="#d8d8d8" stroke-width="1.800"/><path d="M4 13h12" stroke="#999"/></svg>
<svg style="left:1175.5px;top:290.5px;" width="20" height="20" viewBox="0 0 20 20"><circle cx="10" cy="8" r="5.300" fill="none" stroke="#d8d8d8" stroke-width="1.300"/><path d="M7.500 5.500l5 5M12.500 5.500l-5 5" stroke="#d8d8d8" stroke-width="1.200"/><rect x="8" y="14" width="4" height="3.500" rx="1" fill="#999"/></svg>
<svg style="left:1175.5px;top:317px;" width="20" height="20" viewBox="0 0 20 20"><path d="M10 1.500l8.500 8.500-8.500 8.500L1.500 10z" fill="#1c1c1c" stroke="#d8d8d8" stroke-width="1.400"/><circle cx="10" cy="8.500" r="3" fill="#d8d8d8"/><rect x="8.700" y="11.500" width="2.600" height="3" fill="#d8d8d8"/><path d="M15.500 13.500l4.500 3.500-4.500 3z" fill="#8a8a8a"/></svg>
<div style="left:1173.5px;top:340.5px;width:23px;height:24px;background:#6280a6;"></div>
<svg style="left:1175.5px;top:342.5px;" width="20" height="20" viewBox="0 0 20 20"><path d="M10 2a5.500 5.500 0 0 1 5.500 5.500c0 2.500-2 3.500-2.500 6H7c-.5-2.500-2.500-3.500-2.500-6A5.500 5.500 0 0 1 10 2z" fill="#f4f4f0"/><rect x="7.500" y="14" width="5" height="4" rx="1" fill="#aaa"/><path d="M15.500 13.500l4.500 3.500-4.500 3z" fill="#1c2c44"/></svg>
<div style="left:1173.5px;top:370px;width:23px;height:24px;background:#6280a6;"></div>
<svg style="left:1175.5px;top:372px;" width="20" height="20" viewBox="0 0 20 20"><path d="M3 4c5-3 9-3 14 0 1 6-2 11-7 14C5 15 2 10 3 4z" fill="#e8e8e8"/><path d="M3 4c2.500-1.500 4.500-2 7-2v8H2.700C2.500 8 2.700 6 3 4zM10 10h7.300c-.5 3-3 6-7.300 8z" fill="#222"/><path d="M15.500 13.500l4.500 3.500-4.500 3z" fill="#1c2c44"/></svg>
<svg style="left:1175.5px;top:397px;" width="20" height="20" viewBox="0 0 20 20"><path d="M2 6c2-2 5-2 7 0l9 6M4 9a2.500 2.500 0 1 0 5 0M11 12a2.500 2.500 0 1 0 5 1" fill="none" stroke="#d8d8d8" stroke-width="1.400"/><path d="M12 15h7l-3.500 4z" fill="#8a8a8a"/></svg>
<svg style="left:1175.5px;top:423px;" width="20" height="20" viewBox="0 0 20 20"><path d="M4 6c3-3 8-3 11 0" fill="none" stroke="#d8d8d8" stroke-width="1.300"/><ellipse cx="10" cy="7.500" rx="4" ry="2.300" fill="none" stroke="#d8d8d8" stroke-width="1.200"/><circle cx="10" cy="7.500" r="1.300" fill="#d8d8d8"/><rect x="2.500" y="10" width="11" height="8" rx="1" fill="#c4c4c4"/><path d="M6.500 11.500v5l4.500-2.500z" fill="#555"/><path d="M15.500 13.500l4.500 3.500-4.500 3z" fill="#8a8a8a"/></svg>
<div style="left:1172px;top:455px;width:27px;height:1px;background:#2c2c2c;"></div>
<svg style="left:1175.5px;top:455px;" width="20" height="20" viewBox="0 0 20 20"><circle cx="10" cy="9" r="2.200" fill="#d8d8d8"/></svg>
<svg style="left:1175.5px;top:481px;" width="20" height="20" viewBox="0 0 20 20"><circle cx="7.500" cy="13" r="2.600" fill="#c8c8c8"/><path d="M9 11l6-6" stroke="#c8c8c8" stroke-width="1.300"/></svg>
<svg style="left:1175.5px;top:507px;" width="20" height="20" viewBox="0 0 20 20"><path d="M14 4l-5 7-3 6 5-4z" fill="#c8c8c8"/><circle cx="12.500" cy="6" r="2" fill="#e8e8e8"/></svg>
<svg style="left:1175.5px;top:533.5px;" width="20" height="20" viewBox="0 0 20 20"><circle cx="5" cy="14" r="2.200" fill="#e0e0e0"/><path d="M5 14l4-6" stroke="#aaa"/><text x="8" y="11" font-size="9.500" font-weight="bold" fill="#f0f0f0" font-family="Liberation Sans">12</text></svg>
<svg style="left:1175.5px;top:559.5px;" width="20" height="20" viewBox="0 0 20 20"><path d="M4 13l7-4 5 6-9 2z" fill="#d8d8d8"/><path d="M11 9l3-6 1 5z" fill="#e8e8e8"/></svg>
<svg style="left:1175.5px;top:585.5px;" width="20" height="20" viewBox="0 0 20 20"><path d="M3 14l8-4 6 5-10 3z" fill="#d0d0d0"/><text x="8" y="9" font-size="9" font-weight="bold" fill="#f0f0f0" font-family="Liberation Sans">12</text></svg>
<svg style="left:1175.5px;top:613px;" width="20" height="20" viewBox="0 0 20 20"><path d="M4 18V4h13" fill="none" stroke="#d8d8d8" stroke-width="1.200"/><path d="M4 18C5 10 10 5 17 4" fill="none" stroke="#d8d8d8" stroke-width="1.200"/><circle cx="4" cy="4" r="1.300" fill="#d8d8d8"/><circle cx="17" cy="4" r="1.300" fill="#d8d8d8"/></svg>
<div style="left:1173.5px;top:638px;width:23px;height:24px;background:#6280a6;"></div>
<svg style="left:1175.5px;top:640px;" width="20" height="20" viewBox="0 0 20 20"><path d="M2 14l9-9 7 7-12 4z" fill="#e4e8ec"/><path d="M6 16l12-4-5-2z" fill="#3a78c8"/></svg>
<div style="left:1173.5px;top:664.5px;width:23px;height:24px;background:#6280a6;"></div>
<svg style="left:1175.5px;top:666.5px;" width="20" height="20" viewBox="0 0 20 20"><rect x="3" y="3" width="14" height="14" fill="#e8c8c8"/><rect x="3.0" y="3.0" width="3.500" height="3.500" fill="#d86a6a"/><rect x="6.5" y="3.0" width="3.500" height="3.500" fill="#a8b8e0"/><rect x="10.0" y="3.0" width="3.500" height="3.500" fill="#d86a6a"/><rect x="13.5" y="3.0" width="3.500" height="3.500" fill="#a8b8e0"/><rect x="3.0" y="6.5" width="3.500" height="3.500" fill="#a8b8e0"/><rect x="6.5" y="6.5" width="3.500" height="3.500" fill="#d86a6a"/><rect x="10.0" y="6.5" width="3.500" height="3.500" fill="#a8b8e0"/><rect x="13.5" y="6.5" width="3.500" height="3.500" fill="#d86a6a"/><rect x="3.0" y="10.0" width="3.500" height="3.500" fill="#d86a6a"/><rect x="6.5" y="10.0" width="3.500" height="3.500" fill="#a8b8e0"/><rect x="10.0" y="10.0" width="3.500" height="3.500" fill="#d86a6a"/><rect x="13.5" y="10.0" width="3.500" height="3.500" fill="#a8b8e0"/><rect x="3.0" y="13.5" width="3.500" height="3.500" fill="#a8b8e0"/><rect x="6.5" y="13.5" width="3.500" height="3.500" fill="#d86a6a"/><rect x="10.0" y="13.5" width="3.500" height="3.500" fill="#a8b8e0"/><rect x="13.5" y="13.5" width="3.500" height="3.500" fill="#d86a6a"/><path d="M15.500 13.500l4.500 3.500-4.500 3z" fill="#1c2c44"/></svg>
<svg style="left:1175.5px;top:692px;" width="20" height="20" viewBox="0 0 20 20"><path d="M10 3l8 6.500-8 6.500-8-6.500z" fill="#3a78c8"/><path d="M10 5l5.500 4.500L10 14 4.500 9.500z" fill="#d8c8a0"/></svg>
<svg style="left:1175.5px;top:718px;" width="20" height="20" viewBox="0 0 20 20"><rect x="3" y="5" width="14" height="11" rx="2" fill="#58a848"/><rect x="5.500" y="7" width="9" height="7" fill="#c8e0b8"/><path d="M3 5l3 3M17 5l-3 3M3 16l3-3M17 16l-3-3" stroke="#78c868" stroke-width="1.500"/></svg>
<svg style="left:1175.5px;top:744.5px;" width="20" height="20" viewBox="0 0 20 20"><circle cx="11" cy="10" r="2.200" fill="#d8d8d8"/><path d="M11 10L4 10M11 10l4-6M11 10l4 6" stroke="#d8d8d8" stroke-width="1.500"/></svg>
<svg style="left:1175.5px;top:770.5px;" width="20" height="20" viewBox="0 0 20 20"><circle cx="10" cy="10" r="7.600" fill="#2a2a2a" stroke="#d8d8d8" stroke-width="1.300"/><rect x="5.500" y="6" width="9" height="8" fill="#d8d8d8"/><path d="M5.500 10h9" stroke="#777"/></svg>
<div style="left:1173.5px;top:796px;width:23px;height:24px;background:#6280a6;"></div>
<svg style="left:1175.5px;top:798px;" width="20" height="20" viewBox="0 0 20 20"><rect x="3" y="3" width="14" height="14" fill="#1c1c1c" stroke="#e0e0e0" stroke-width="1.400"/><path d="M3 13c3-5 5-5 7-2s4 0 7-4v10H3z" fill="#b8b8b8"/><path d="M15.500 13.500l4.500 3.500-4.500 3z" fill="#1c2c44"/></svg>
<div style="left:1172px;top:825px;width:27px;height:1px;background:#2c2c2c;"></div>
<div style="left:1173.5px;top:834px;width:23px;height:24px;background:#6280a6;"></div>
<svg style="left:1175.5px;top:836px;" width="20" height="20" viewBox="0 0 20 20"><path d="M10 2.500a5.500 5.500 0 0 1 5.500 5.500c0 4-5.500 10-5.500 10S4.500 12 4.500 8A5.500 5.500 0 0 1 10 2.500z" fill="#e8e8e8"/><circle cx="10" cy="8" r="2.300" fill="#777"/><path d="M15.500 13.500l4.500 3.500-4.500 3z" fill="#1c2c44"/></svg>
<div style="left:1172px;top:897px;width:27px;height:1px;background:#2c2c2c;"></div>
<svg style="left:1175.5px;top:904.5px;" width="20" height="20" viewBox="0 0 20 20"><circle cx="10" cy="10" r="7.300" fill="none" stroke="#d8d8d8" stroke-width="1.300"/><text x="10" y="14" font-size="11" font-style="italic" font-weight="bold" text-anchor="middle" fill="#d8d8d8" font-family="Liberation Serif">i</text></svg>
<div style="left:1173.5px;top:930px;width:23px;height:24px;background:#6280a6;"></div>
<svg style="left:1175.5px;top:932px;" width="20" height="20" viewBox="0 0 20 20"><rect x="3.500" y="3.500" width="6" height="6" fill="#f0d040"/><rect x="10.500" y="3.500" width="6" height="6" fill="#f0d040"/><rect x="3.500" y="10.500" width="6" height="6" fill="#f0d040"/><rect x="10.500" y="10.500" width="6" height="6" fill="#f0d040"/></svg>
<svg style="left:1175.5px;top:956px;" width="20" height="20" viewBox="0 0 20 20"><rect x="2" y="1" width="16" height="15" fill="#f4f4f4"/><path d="M4 8.500c3-4 9-4 12 0-3 4-9 4-12 0z" fill="#fff" stroke="#222" stroke-width="1"/><circle cx="10" cy="8.500" r="2.600" fill="#111"/><path d="M15.500 13.500l4.500 3.500-4.500 3z" fill="#8a8a8a"/></svg>
<svg style="left:1199.5px;top:505.5px;" width="8" height="10" viewBox="0 0 8 10"><path d="M6 1L1.500 5 6 9z" fill="#666"/></svg>
<svg style="left:1199.5px;top:571px;" width="8" height="10" viewBox="0 0 8 10"><path d="M2 1l4.500 4L2 9z" fill="#666"/></svg>
<svg style="left:1200px;top:532px;" width="7" height="24" viewBox="0 0 7 24"><rect x="1.2" y="1.0" width="1.300" height="1.300" fill="#707070"/><rect x="3.8" y="1.0" width="1.300" height="1.300" fill="#707070"/><rect x="1.2" y="4.1" width="1.300" height="1.300" fill="#707070"/><rect x="3.8" y="4.1" width="1.300" height="1.300" fill="#707070"/><rect x="1.2" y="7.2" width="1.300" height="1.300" fill="#707070"/><rect x="3.8" y="7.2" width="1.300" height="1.300" fill="#707070"/><rect x="1.2" y="10.3" width="1.300" height="1.300" fill="#707070"/><rect x="3.8" y="10.3" width="1.300" height="1.300" fill="#707070"/><rect x="1.2" y="13.4" width="1.300" height="1.300" fill="#707070"/><rect x="3.8" y="13.4" width="1.300" height="1.300" fill="#707070"/><rect x="1.2" y="16.5" width="1.300" height="1.300" fill="#707070"/><rect x="3.8" y="16.5" width="1.300" height="1.300" fill="#707070"/><rect x="1.2" y="19.6" width="1.300" height="1.300" fill="#707070"/><rect x="3.8" y="19.6" width="1.300" height="1.300" fill="#707070"/></svg>
</body></html>
